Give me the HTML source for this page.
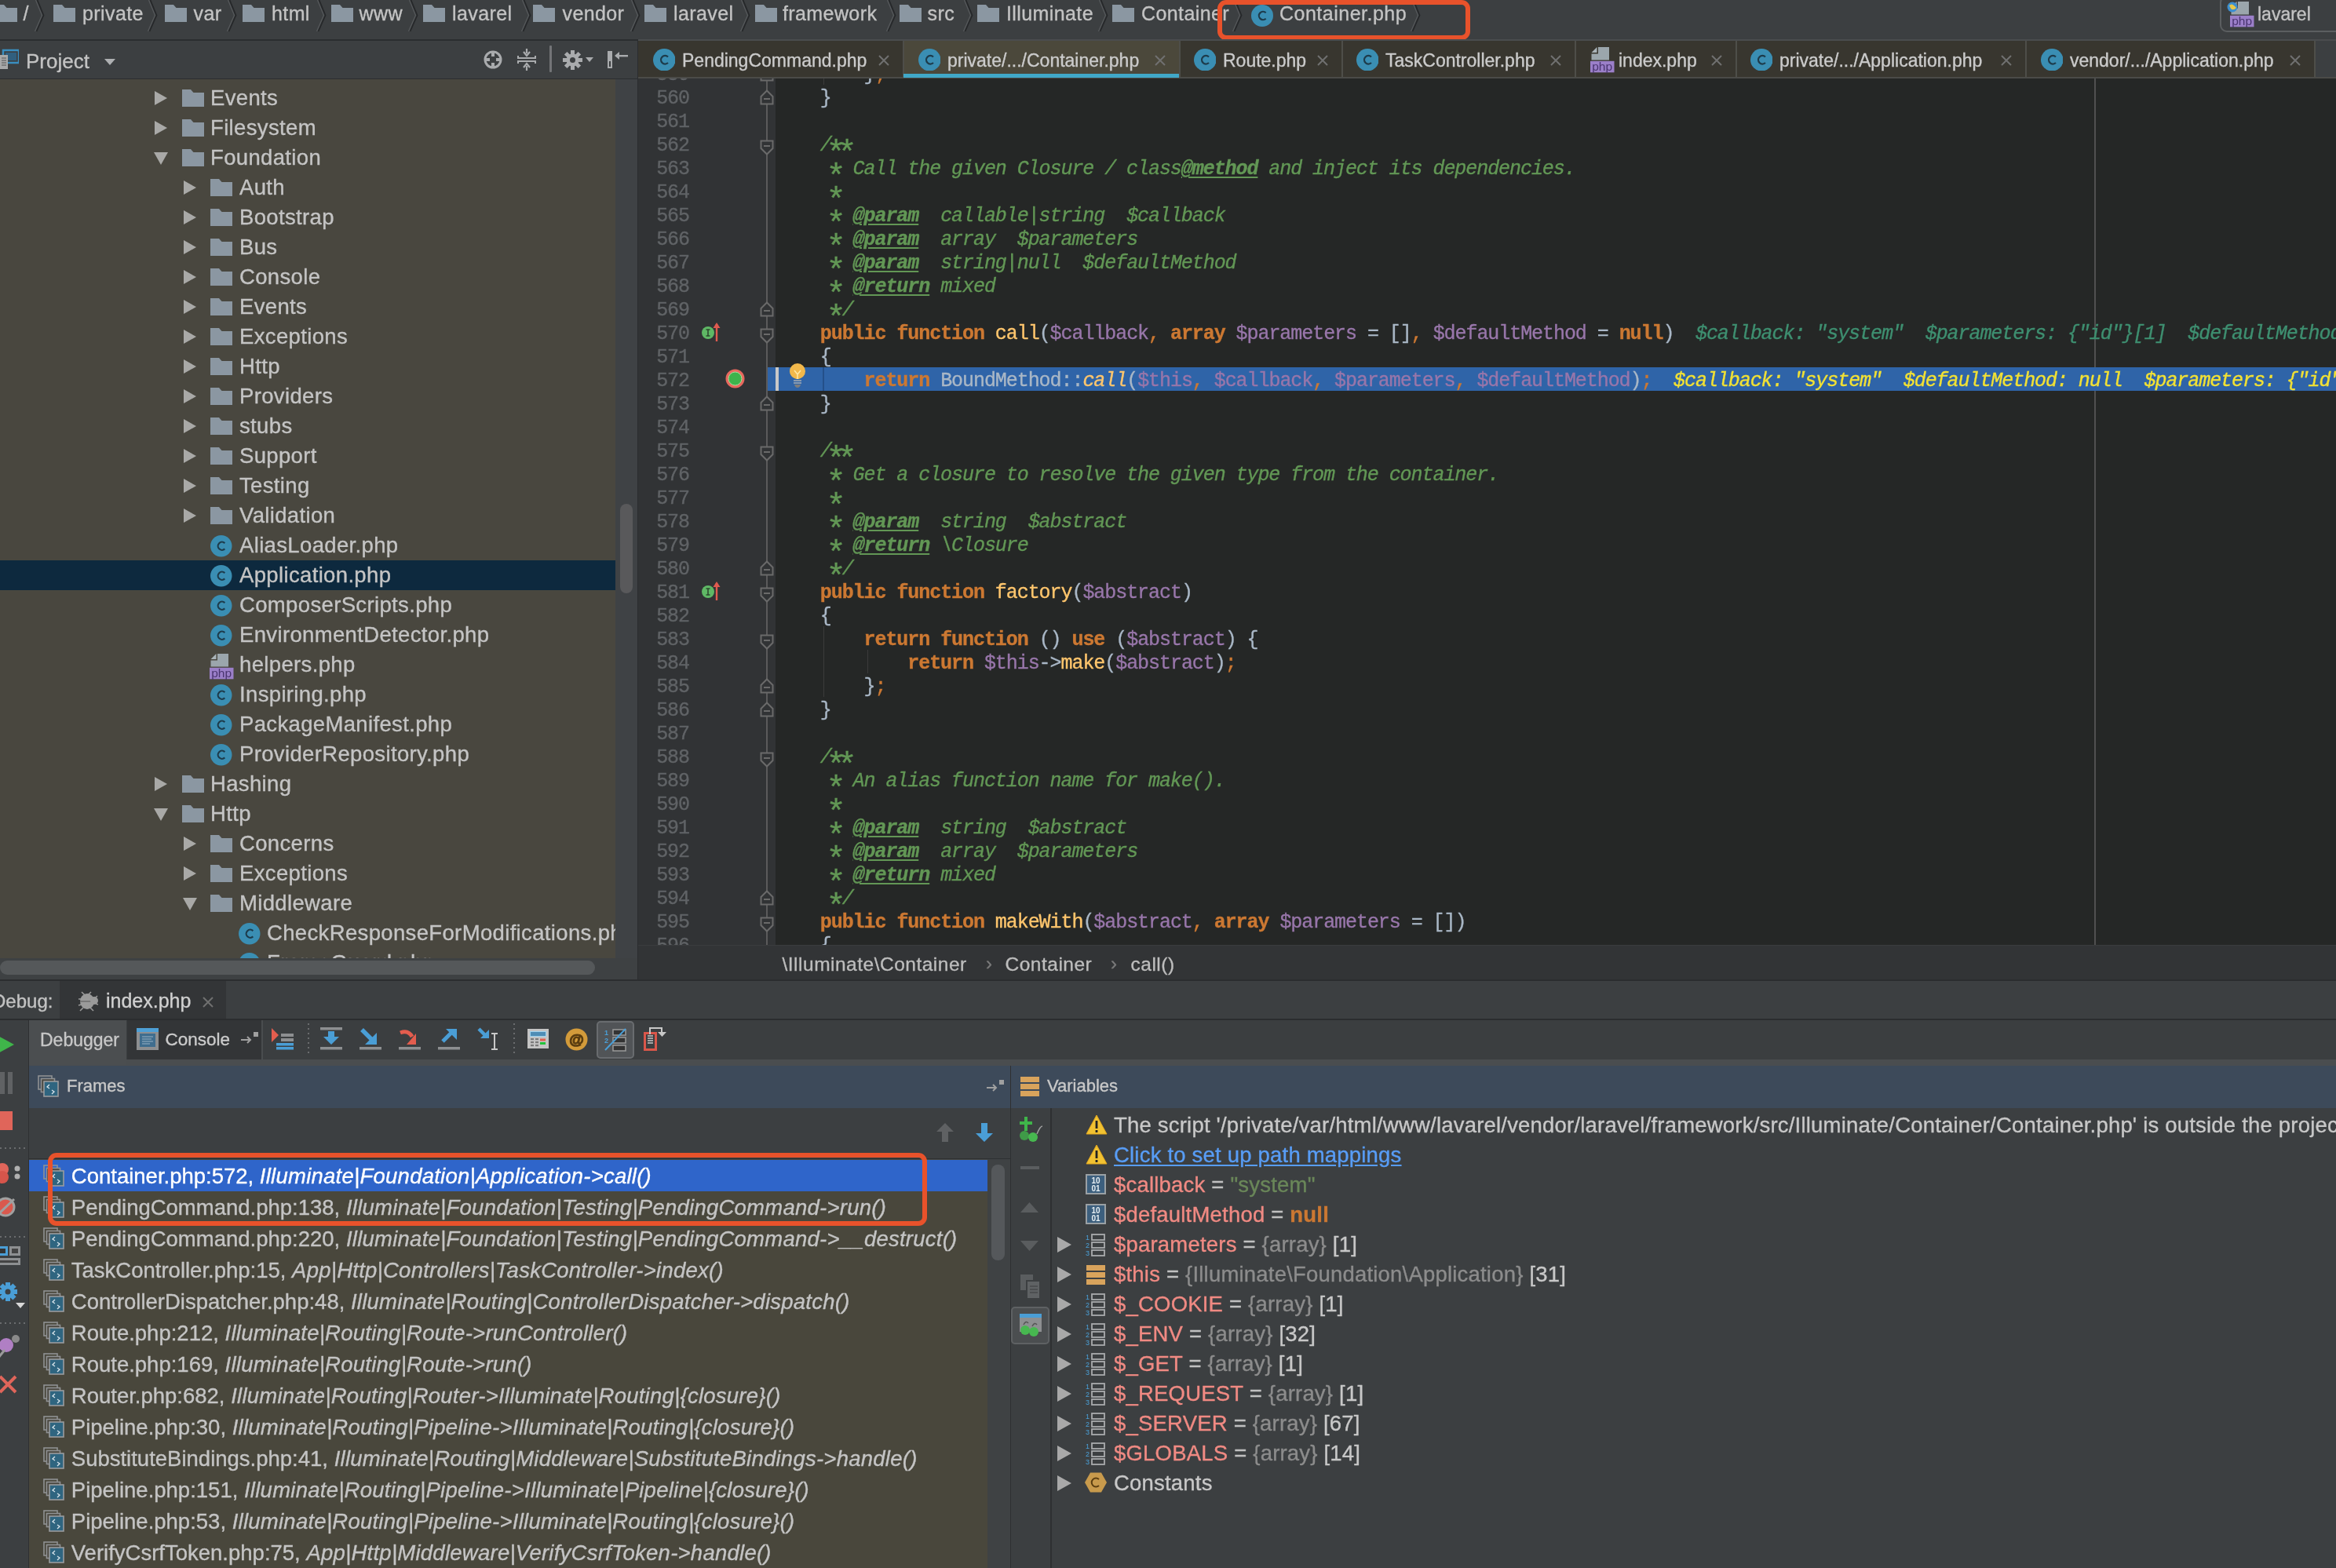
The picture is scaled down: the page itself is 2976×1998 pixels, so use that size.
<!DOCTYPE html><html><head><meta charset="utf-8"><style>
html,body{margin:0;padding:0;}
body{width:2976px;height:1998px;overflow:hidden;position:relative;background:#3c3f41;font-family:'Liberation Sans',sans-serif;}
div{position:absolute;box-sizing:border-box;}
.t{white-space:pre;-webkit-text-stroke-width:0.35px;}
</style></head><body><div id="root" style="left:0;top:0;width:2976px;height:1998px;will-change:transform;">
<div style="left:813px;top:100px;width:175px;height:1104px;background:#313335;"></div>
<div style="left:988px;top:100px;width:1988px;height:1104px;background:#252726;"></div>
<div style="left:2668px;top:100px;width:2px;height:1104px;background:#505050;"></div>
<div style="left:976px;top:100px;width:2px;height:1104px;background:#5b5b5b;"></div>
<div style="left:978px;top:468px;width:1998px;height:30px;background:#2f64a8;"></div>
<div style="left:988px;top:468px;width:4px;height:30px;background:#c8c8c8;"></div>
<div class="t" style="left:989px;top:82.85px;font-family:'Liberation Mono', monospace;font-size:25px;line-height:25px;letter-spacing:-1.062px;color:#a9b7c6">        <span style="color:#a9b7c6;">}</span><span style="color:#cc7832;">;</span></div>
<div class="t" style="left:989px;top:112.85px;font-family:'Liberation Mono', monospace;font-size:25px;line-height:25px;letter-spacing:-1.062px;color:#a9b7c6">    <span style="color:#a9b7c6;">}</span></div>
<div class="t" style="left:989px;top:142.85px;font-family:'Liberation Mono', monospace;font-size:25px;line-height:25px;letter-spacing:-1.062px;color:#a9b7c6"></div>
<div class="t" style="left:989px;top:172.85px;font-family:'Liberation Mono', monospace;font-size:25px;line-height:25px;letter-spacing:-1.062px;color:#a9b7c6"><span style="color:#629755;font-style:italic;">    /<span style="font-size:42px;letter-spacing:-11.264px;position:relative;top:16px;left:-6.1px;font-style:normal;line-height:0">*</span><span style="font-size:42px;letter-spacing:-11.264px;position:relative;top:16px;left:-6.1px;font-style:normal;line-height:0">*</span></span></div>
<div class="t" style="left:989px;top:202.85px;font-family:'Liberation Mono', monospace;font-size:25px;line-height:25px;letter-spacing:-1.062px;color:#a9b7c6"><span style="color:#629755;font-style:italic;">     <span style="font-size:42px;letter-spacing:-11.264px;position:relative;top:16px;left:-6.1px;font-style:normal;line-height:0">*</span> Call the given Closure / class</span><span style="color:#629755;font-weight:bold;font-style:italic;text-decoration:underline;text-underline-offset:3px;text-decoration-thickness:2px;">@method</span><span style="color:#629755;font-style:italic;"> and inject its dependencies.</span></div>
<div class="t" style="left:989px;top:232.85px;font-family:'Liberation Mono', monospace;font-size:25px;line-height:25px;letter-spacing:-1.062px;color:#a9b7c6"><span style="color:#629755;font-style:italic;">     <span style="font-size:42px;letter-spacing:-11.264px;position:relative;top:16px;left:-6.1px;font-style:normal;line-height:0">*</span></span></div>
<div class="t" style="left:989px;top:262.85px;font-family:'Liberation Mono', monospace;font-size:25px;line-height:25px;letter-spacing:-1.062px;color:#a9b7c6"><span style="color:#629755;font-style:italic;">     <span style="font-size:42px;letter-spacing:-11.264px;position:relative;top:16px;left:-6.1px;font-style:normal;line-height:0">*</span> </span><span style="color:#629755;font-weight:bold;font-style:italic;text-decoration:underline;text-underline-offset:3px;text-decoration-thickness:2px;">@param</span><span style="color:#629755;font-style:italic;">  callable|string  $callback</span></div>
<div class="t" style="left:989px;top:292.85px;font-family:'Liberation Mono', monospace;font-size:25px;line-height:25px;letter-spacing:-1.062px;color:#a9b7c6"><span style="color:#629755;font-style:italic;">     <span style="font-size:42px;letter-spacing:-11.264px;position:relative;top:16px;left:-6.1px;font-style:normal;line-height:0">*</span> </span><span style="color:#629755;font-weight:bold;font-style:italic;text-decoration:underline;text-underline-offset:3px;text-decoration-thickness:2px;">@param</span><span style="color:#629755;font-style:italic;">  array  $parameters</span></div>
<div class="t" style="left:989px;top:322.85px;font-family:'Liberation Mono', monospace;font-size:25px;line-height:25px;letter-spacing:-1.062px;color:#a9b7c6"><span style="color:#629755;font-style:italic;">     <span style="font-size:42px;letter-spacing:-11.264px;position:relative;top:16px;left:-6.1px;font-style:normal;line-height:0">*</span> </span><span style="color:#629755;font-weight:bold;font-style:italic;text-decoration:underline;text-underline-offset:3px;text-decoration-thickness:2px;">@param</span><span style="color:#629755;font-style:italic;">  string|null  $defaultMethod</span></div>
<div class="t" style="left:989px;top:352.85px;font-family:'Liberation Mono', monospace;font-size:25px;line-height:25px;letter-spacing:-1.062px;color:#a9b7c6"><span style="color:#629755;font-style:italic;">     <span style="font-size:42px;letter-spacing:-11.264px;position:relative;top:16px;left:-6.1px;font-style:normal;line-height:0">*</span> </span><span style="color:#629755;font-weight:bold;font-style:italic;text-decoration:underline;text-underline-offset:3px;text-decoration-thickness:2px;">@return</span><span style="color:#629755;font-style:italic;"> mixed</span></div>
<div class="t" style="left:989px;top:382.85px;font-family:'Liberation Mono', monospace;font-size:25px;line-height:25px;letter-spacing:-1.062px;color:#a9b7c6"><span style="color:#629755;font-style:italic;">     <span style="font-size:42px;letter-spacing:-11.264px;position:relative;top:16px;left:-6.1px;font-style:normal;line-height:0">*</span>/</span></div>
<div class="t" style="left:989px;top:412.85px;font-family:'Liberation Mono', monospace;font-size:25px;line-height:25px;letter-spacing:-1.062px;color:#a9b7c6">    <span style="color:#cc7832;font-weight:bold;">public</span> <span style="color:#cc7832;font-weight:bold;">function</span> <span style="color:#ffc66d;">call</span><span style="color:#a9b7c6;">(</span><span style="color:#9876aa;">$callback</span><span style="color:#cc7832;">,</span> <span style="color:#cc7832;font-weight:bold;">array</span> <span style="color:#9876aa;">$parameters</span> <span style="color:#a9b7c6;">=</span> <span style="color:#a9b7c6;">[</span><span style="color:#a9b7c6;">]</span><span style="color:#cc7832;">,</span> <span style="color:#9876aa;">$defaultMethod</span> <span style="color:#a9b7c6;">=</span> <span style="color:#cc7832;font-weight:bold;">null</span><span style="color:#a9b7c6;">)</span></div>
<div class="t" style="left:989px;top:442.85px;font-family:'Liberation Mono', monospace;font-size:25px;line-height:25px;letter-spacing:-1.062px;color:#a9b7c6">    <span style="color:#a9b7c6;">{</span></div>
<div class="t" style="left:989px;top:472.85px;font-family:'Liberation Mono', monospace;font-size:25px;line-height:25px;letter-spacing:-1.062px;color:#a9b7c6">        <span style="color:#cc7832;font-weight:bold;">return</span> <span style="color:#a9b7c6;">BoundMethod</span><span style="color:#a9b7c6;">:</span><span style="color:#a9b7c6;">:</span><span style="color:#ffc66d;font-style:italic;">call</span><span style="color:#a9b7c6;">(</span><span style="color:#9876aa;">$this</span><span style="color:#cc7832;">,</span> <span style="color:#9876aa;">$callback</span><span style="color:#cc7832;">,</span> <span style="color:#9876aa;">$parameters</span><span style="color:#cc7832;">,</span> <span style="color:#9876aa;">$defaultMethod</span><span style="color:#a9b7c6;">)</span><span style="color:#cc7832;">;</span></div>
<div class="t" style="left:989px;top:502.85px;font-family:'Liberation Mono', monospace;font-size:25px;line-height:25px;letter-spacing:-1.062px;color:#a9b7c6">    <span style="color:#a9b7c6;">}</span></div>
<div class="t" style="left:989px;top:532.85px;font-family:'Liberation Mono', monospace;font-size:25px;line-height:25px;letter-spacing:-1.062px;color:#a9b7c6"></div>
<div class="t" style="left:989px;top:562.85px;font-family:'Liberation Mono', monospace;font-size:25px;line-height:25px;letter-spacing:-1.062px;color:#a9b7c6"><span style="color:#629755;font-style:italic;">    /<span style="font-size:42px;letter-spacing:-11.264px;position:relative;top:16px;left:-6.1px;font-style:normal;line-height:0">*</span><span style="font-size:42px;letter-spacing:-11.264px;position:relative;top:16px;left:-6.1px;font-style:normal;line-height:0">*</span></span></div>
<div class="t" style="left:989px;top:592.85px;font-family:'Liberation Mono', monospace;font-size:25px;line-height:25px;letter-spacing:-1.062px;color:#a9b7c6"><span style="color:#629755;font-style:italic;">     <span style="font-size:42px;letter-spacing:-11.264px;position:relative;top:16px;left:-6.1px;font-style:normal;line-height:0">*</span> Get a closure to resolve the given type from the container.</span></div>
<div class="t" style="left:989px;top:622.85px;font-family:'Liberation Mono', monospace;font-size:25px;line-height:25px;letter-spacing:-1.062px;color:#a9b7c6"><span style="color:#629755;font-style:italic;">     <span style="font-size:42px;letter-spacing:-11.264px;position:relative;top:16px;left:-6.1px;font-style:normal;line-height:0">*</span></span></div>
<div class="t" style="left:989px;top:652.85px;font-family:'Liberation Mono', monospace;font-size:25px;line-height:25px;letter-spacing:-1.062px;color:#a9b7c6"><span style="color:#629755;font-style:italic;">     <span style="font-size:42px;letter-spacing:-11.264px;position:relative;top:16px;left:-6.1px;font-style:normal;line-height:0">*</span> </span><span style="color:#629755;font-weight:bold;font-style:italic;text-decoration:underline;text-underline-offset:3px;text-decoration-thickness:2px;">@param</span><span style="color:#629755;font-style:italic;">  string  $abstract</span></div>
<div class="t" style="left:989px;top:682.85px;font-family:'Liberation Mono', monospace;font-size:25px;line-height:25px;letter-spacing:-1.062px;color:#a9b7c6"><span style="color:#629755;font-style:italic;">     <span style="font-size:42px;letter-spacing:-11.264px;position:relative;top:16px;left:-6.1px;font-style:normal;line-height:0">*</span> </span><span style="color:#629755;font-weight:bold;font-style:italic;text-decoration:underline;text-underline-offset:3px;text-decoration-thickness:2px;">@return</span><span style="color:#629755;font-style:italic;"> \Closure</span></div>
<div class="t" style="left:989px;top:712.85px;font-family:'Liberation Mono', monospace;font-size:25px;line-height:25px;letter-spacing:-1.062px;color:#a9b7c6"><span style="color:#629755;font-style:italic;">     <span style="font-size:42px;letter-spacing:-11.264px;position:relative;top:16px;left:-6.1px;font-style:normal;line-height:0">*</span>/</span></div>
<div class="t" style="left:989px;top:742.85px;font-family:'Liberation Mono', monospace;font-size:25px;line-height:25px;letter-spacing:-1.062px;color:#a9b7c6">    <span style="color:#cc7832;font-weight:bold;">public</span> <span style="color:#cc7832;font-weight:bold;">function</span> <span style="color:#ffc66d;">factory</span><span style="color:#a9b7c6;">(</span><span style="color:#9876aa;">$abstract</span><span style="color:#a9b7c6;">)</span></div>
<div class="t" style="left:989px;top:772.85px;font-family:'Liberation Mono', monospace;font-size:25px;line-height:25px;letter-spacing:-1.062px;color:#a9b7c6">    <span style="color:#a9b7c6;">{</span></div>
<div class="t" style="left:989px;top:802.85px;font-family:'Liberation Mono', monospace;font-size:25px;line-height:25px;letter-spacing:-1.062px;color:#a9b7c6">        <span style="color:#cc7832;font-weight:bold;">return</span> <span style="color:#cc7832;font-weight:bold;">function</span> <span style="color:#a9b7c6;">(</span><span style="color:#a9b7c6;">)</span> <span style="color:#cc7832;font-weight:bold;">use</span> <span style="color:#a9b7c6;">(</span><span style="color:#9876aa;">$abstract</span><span style="color:#a9b7c6;">)</span> <span style="color:#a9b7c6;">{</span></div>
<div class="t" style="left:989px;top:832.85px;font-family:'Liberation Mono', monospace;font-size:25px;line-height:25px;letter-spacing:-1.062px;color:#a9b7c6">            <span style="color:#cc7832;font-weight:bold;">return</span> <span style="color:#9876aa;">$this</span><span style="color:#a9b7c6;">-</span><span style="color:#a9b7c6;">&gt;</span><span style="color:#ffc66d;">make</span><span style="color:#a9b7c6;">(</span><span style="color:#9876aa;">$abstract</span><span style="color:#a9b7c6;">)</span><span style="color:#cc7832;">;</span></div>
<div class="t" style="left:989px;top:862.85px;font-family:'Liberation Mono', monospace;font-size:25px;line-height:25px;letter-spacing:-1.062px;color:#a9b7c6">        <span style="color:#a9b7c6;">}</span><span style="color:#cc7832;">;</span></div>
<div class="t" style="left:989px;top:892.85px;font-family:'Liberation Mono', monospace;font-size:25px;line-height:25px;letter-spacing:-1.062px;color:#a9b7c6">    <span style="color:#a9b7c6;">}</span></div>
<div class="t" style="left:989px;top:922.85px;font-family:'Liberation Mono', monospace;font-size:25px;line-height:25px;letter-spacing:-1.062px;color:#a9b7c6"></div>
<div class="t" style="left:989px;top:952.85px;font-family:'Liberation Mono', monospace;font-size:25px;line-height:25px;letter-spacing:-1.062px;color:#a9b7c6"><span style="color:#629755;font-style:italic;">    /<span style="font-size:42px;letter-spacing:-11.264px;position:relative;top:16px;left:-6.1px;font-style:normal;line-height:0">*</span><span style="font-size:42px;letter-spacing:-11.264px;position:relative;top:16px;left:-6.1px;font-style:normal;line-height:0">*</span></span></div>
<div class="t" style="left:989px;top:982.85px;font-family:'Liberation Mono', monospace;font-size:25px;line-height:25px;letter-spacing:-1.062px;color:#a9b7c6"><span style="color:#629755;font-style:italic;">     <span style="font-size:42px;letter-spacing:-11.264px;position:relative;top:16px;left:-6.1px;font-style:normal;line-height:0">*</span> An alias function name for make().</span></div>
<div class="t" style="left:989px;top:1012.85px;font-family:'Liberation Mono', monospace;font-size:25px;line-height:25px;letter-spacing:-1.062px;color:#a9b7c6"><span style="color:#629755;font-style:italic;">     <span style="font-size:42px;letter-spacing:-11.264px;position:relative;top:16px;left:-6.1px;font-style:normal;line-height:0">*</span></span></div>
<div class="t" style="left:989px;top:1042.85px;font-family:'Liberation Mono', monospace;font-size:25px;line-height:25px;letter-spacing:-1.062px;color:#a9b7c6"><span style="color:#629755;font-style:italic;">     <span style="font-size:42px;letter-spacing:-11.264px;position:relative;top:16px;left:-6.1px;font-style:normal;line-height:0">*</span> </span><span style="color:#629755;font-weight:bold;font-style:italic;text-decoration:underline;text-underline-offset:3px;text-decoration-thickness:2px;">@param</span><span style="color:#629755;font-style:italic;">  string  $abstract</span></div>
<div class="t" style="left:989px;top:1072.85px;font-family:'Liberation Mono', monospace;font-size:25px;line-height:25px;letter-spacing:-1.062px;color:#a9b7c6"><span style="color:#629755;font-style:italic;">     <span style="font-size:42px;letter-spacing:-11.264px;position:relative;top:16px;left:-6.1px;font-style:normal;line-height:0">*</span> </span><span style="color:#629755;font-weight:bold;font-style:italic;text-decoration:underline;text-underline-offset:3px;text-decoration-thickness:2px;">@param</span><span style="color:#629755;font-style:italic;">  array  $parameters</span></div>
<div class="t" style="left:989px;top:1102.85px;font-family:'Liberation Mono', monospace;font-size:25px;line-height:25px;letter-spacing:-1.062px;color:#a9b7c6"><span style="color:#629755;font-style:italic;">     <span style="font-size:42px;letter-spacing:-11.264px;position:relative;top:16px;left:-6.1px;font-style:normal;line-height:0">*</span> </span><span style="color:#629755;font-weight:bold;font-style:italic;text-decoration:underline;text-underline-offset:3px;text-decoration-thickness:2px;">@return</span><span style="color:#629755;font-style:italic;"> mixed</span></div>
<div class="t" style="left:989px;top:1132.85px;font-family:'Liberation Mono', monospace;font-size:25px;line-height:25px;letter-spacing:-1.062px;color:#a9b7c6"><span style="color:#629755;font-style:italic;">     <span style="font-size:42px;letter-spacing:-11.264px;position:relative;top:16px;left:-6.1px;font-style:normal;line-height:0">*</span>/</span></div>
<div class="t" style="left:989px;top:1162.85px;font-family:'Liberation Mono', monospace;font-size:25px;line-height:25px;letter-spacing:-1.062px;color:#a9b7c6">    <span style="color:#cc7832;font-weight:bold;">public</span> <span style="color:#cc7832;font-weight:bold;">function</span> <span style="color:#ffc66d;">makeWith</span><span style="color:#a9b7c6;">(</span><span style="color:#9876aa;">$abstract</span><span style="color:#cc7832;">,</span> <span style="color:#cc7832;font-weight:bold;">array</span> <span style="color:#9876aa;">$parameters</span> <span style="color:#a9b7c6;">=</span> <span style="color:#a9b7c6;">[</span><span style="color:#a9b7c6;">]</span><span style="color:#a9b7c6;">)</span></div>
<div class="t" style="left:989px;top:1192.85px;font-family:'Liberation Mono', monospace;font-size:25px;line-height:25px;letter-spacing:-1.062px;color:#a9b7c6">    <span style="color:#a9b7c6;">{</span></div>
<div class="t" style="left:2159.96px;top:412.85px;font-family:'Liberation Mono', monospace;font-size:25px;line-height:25px;letter-spacing:-1.062px;color:#3e8f70;font-style:italic;font-weight:normal">$callback: &quot;system&quot;  $parameters: {&quot;id&quot;}[1]  $defaultMethod: null</div>
<div class="t" style="left:2132.08px;top:472.85px;font-family:'Liberation Mono', monospace;font-size:25px;line-height:25px;letter-spacing:-1.062px;color:#f2e134;font-style:italic;font-weight:normal">$callback: &quot;system&quot;  $defaultMethod: null  $parameters: {&quot;id&quot;}[1]</div>
<div style="left:1049px;top:798px;width:1px;height:30px;background:#3b3b3b;"></div>
<div style="left:1049px;top:828px;width:1px;height:30px;background:#3b3b3b;"></div>
<div style="left:1049px;top:858px;width:1px;height:30px;background:#3b3b3b;"></div>
<div style="left:1105px;top:828px;width:1px;height:30px;background:#3b3b3b;"></div>
<div style="left:1049px;top:78px;width:1px;height:30px;background:#3b3b3b;"></div>
<div style="left:1048px;top:468px;width:2px;height:30px;background:#24508a;"></div>
<div class="t" style="left:836.18px;top:82.85px;font-family:'Liberation Mono', monospace;font-size:25px;line-height:25px;letter-spacing:-1.062px;color:#606366">559</div>
<div class="t" style="left:836.18px;top:112.85px;font-family:'Liberation Mono', monospace;font-size:25px;line-height:25px;letter-spacing:-1.062px;color:#606366">560</div>
<div class="t" style="left:836.18px;top:142.85px;font-family:'Liberation Mono', monospace;font-size:25px;line-height:25px;letter-spacing:-1.062px;color:#606366">561</div>
<div class="t" style="left:836.18px;top:172.85px;font-family:'Liberation Mono', monospace;font-size:25px;line-height:25px;letter-spacing:-1.062px;color:#606366">562</div>
<div class="t" style="left:836.18px;top:202.85px;font-family:'Liberation Mono', monospace;font-size:25px;line-height:25px;letter-spacing:-1.062px;color:#606366">563</div>
<div class="t" style="left:836.18px;top:232.85px;font-family:'Liberation Mono', monospace;font-size:25px;line-height:25px;letter-spacing:-1.062px;color:#606366">564</div>
<div class="t" style="left:836.18px;top:262.85px;font-family:'Liberation Mono', monospace;font-size:25px;line-height:25px;letter-spacing:-1.062px;color:#606366">565</div>
<div class="t" style="left:836.18px;top:292.85px;font-family:'Liberation Mono', monospace;font-size:25px;line-height:25px;letter-spacing:-1.062px;color:#606366">566</div>
<div class="t" style="left:836.18px;top:322.85px;font-family:'Liberation Mono', monospace;font-size:25px;line-height:25px;letter-spacing:-1.062px;color:#606366">567</div>
<div class="t" style="left:836.18px;top:352.85px;font-family:'Liberation Mono', monospace;font-size:25px;line-height:25px;letter-spacing:-1.062px;color:#606366">568</div>
<div class="t" style="left:836.18px;top:382.85px;font-family:'Liberation Mono', monospace;font-size:25px;line-height:25px;letter-spacing:-1.062px;color:#606366">569</div>
<div class="t" style="left:836.18px;top:412.85px;font-family:'Liberation Mono', monospace;font-size:25px;line-height:25px;letter-spacing:-1.062px;color:#606366">570</div>
<div class="t" style="left:836.18px;top:442.85px;font-family:'Liberation Mono', monospace;font-size:25px;line-height:25px;letter-spacing:-1.062px;color:#606366">571</div>
<div class="t" style="left:836.18px;top:472.85px;font-family:'Liberation Mono', monospace;font-size:25px;line-height:25px;letter-spacing:-1.062px;color:#606366">572</div>
<div class="t" style="left:836.18px;top:502.85px;font-family:'Liberation Mono', monospace;font-size:25px;line-height:25px;letter-spacing:-1.062px;color:#606366">573</div>
<div class="t" style="left:836.18px;top:532.85px;font-family:'Liberation Mono', monospace;font-size:25px;line-height:25px;letter-spacing:-1.062px;color:#606366">574</div>
<div class="t" style="left:836.18px;top:562.85px;font-family:'Liberation Mono', monospace;font-size:25px;line-height:25px;letter-spacing:-1.062px;color:#606366">575</div>
<div class="t" style="left:836.18px;top:592.85px;font-family:'Liberation Mono', monospace;font-size:25px;line-height:25px;letter-spacing:-1.062px;color:#606366">576</div>
<div class="t" style="left:836.18px;top:622.85px;font-family:'Liberation Mono', monospace;font-size:25px;line-height:25px;letter-spacing:-1.062px;color:#606366">577</div>
<div class="t" style="left:836.18px;top:652.85px;font-family:'Liberation Mono', monospace;font-size:25px;line-height:25px;letter-spacing:-1.062px;color:#606366">578</div>
<div class="t" style="left:836.18px;top:682.85px;font-family:'Liberation Mono', monospace;font-size:25px;line-height:25px;letter-spacing:-1.062px;color:#606366">579</div>
<div class="t" style="left:836.18px;top:712.85px;font-family:'Liberation Mono', monospace;font-size:25px;line-height:25px;letter-spacing:-1.062px;color:#606366">580</div>
<div class="t" style="left:836.18px;top:742.85px;font-family:'Liberation Mono', monospace;font-size:25px;line-height:25px;letter-spacing:-1.062px;color:#606366">581</div>
<div class="t" style="left:836.18px;top:772.85px;font-family:'Liberation Mono', monospace;font-size:25px;line-height:25px;letter-spacing:-1.062px;color:#606366">582</div>
<div class="t" style="left:836.18px;top:802.85px;font-family:'Liberation Mono', monospace;font-size:25px;line-height:25px;letter-spacing:-1.062px;color:#606366">583</div>
<div class="t" style="left:836.18px;top:832.85px;font-family:'Liberation Mono', monospace;font-size:25px;line-height:25px;letter-spacing:-1.062px;color:#606366">584</div>
<div class="t" style="left:836.18px;top:862.85px;font-family:'Liberation Mono', monospace;font-size:25px;line-height:25px;letter-spacing:-1.062px;color:#606366">585</div>
<div class="t" style="left:836.18px;top:892.85px;font-family:'Liberation Mono', monospace;font-size:25px;line-height:25px;letter-spacing:-1.062px;color:#606366">586</div>
<div class="t" style="left:836.18px;top:922.85px;font-family:'Liberation Mono', monospace;font-size:25px;line-height:25px;letter-spacing:-1.062px;color:#606366">587</div>
<div class="t" style="left:836.18px;top:952.85px;font-family:'Liberation Mono', monospace;font-size:25px;line-height:25px;letter-spacing:-1.062px;color:#606366">588</div>
<div class="t" style="left:836.18px;top:982.85px;font-family:'Liberation Mono', monospace;font-size:25px;line-height:25px;letter-spacing:-1.062px;color:#606366">589</div>
<div class="t" style="left:836.18px;top:1012.85px;font-family:'Liberation Mono', monospace;font-size:25px;line-height:25px;letter-spacing:-1.062px;color:#606366">590</div>
<div class="t" style="left:836.18px;top:1042.85px;font-family:'Liberation Mono', monospace;font-size:25px;line-height:25px;letter-spacing:-1.062px;color:#606366">591</div>
<div class="t" style="left:836.18px;top:1072.85px;font-family:'Liberation Mono', monospace;font-size:25px;line-height:25px;letter-spacing:-1.062px;color:#606366">592</div>
<div class="t" style="left:836.18px;top:1102.85px;font-family:'Liberation Mono', monospace;font-size:25px;line-height:25px;letter-spacing:-1.062px;color:#606366">593</div>
<div class="t" style="left:836.18px;top:1132.85px;font-family:'Liberation Mono', monospace;font-size:25px;line-height:25px;letter-spacing:-1.062px;color:#606366">594</div>
<div class="t" style="left:836.18px;top:1162.85px;font-family:'Liberation Mono', monospace;font-size:25px;line-height:25px;letter-spacing:-1.062px;color:#606366">595</div>
<div class="t" style="left:836.18px;top:1192.85px;font-family:'Liberation Mono', monospace;font-size:25px;line-height:25px;letter-spacing:-1.062px;color:#606366">596</div>
<svg style="position:absolute;left:968px;top:178px;" width="18" height="20" viewBox="0 0 18 20"><path d="M1.5 1.5 H16.5 V11 L9 18.5 L1.5 11 Z" fill="#313335" stroke="#6a6a6a" stroke-width="2"/><path d="M5 8 H13" stroke="#6a6a6a" stroke-width="2"/></svg>
<svg style="position:absolute;left:968px;top:418px;" width="18" height="20" viewBox="0 0 18 20"><path d="M1.5 1.5 H16.5 V11 L9 18.5 L1.5 11 Z" fill="#313335" stroke="#6a6a6a" stroke-width="2"/><path d="M5 8 H13" stroke="#6a6a6a" stroke-width="2"/></svg>
<svg style="position:absolute;left:968px;top:568px;" width="18" height="20" viewBox="0 0 18 20"><path d="M1.5 1.5 H16.5 V11 L9 18.5 L1.5 11 Z" fill="#313335" stroke="#6a6a6a" stroke-width="2"/><path d="M5 8 H13" stroke="#6a6a6a" stroke-width="2"/></svg>
<svg style="position:absolute;left:968px;top:748px;" width="18" height="20" viewBox="0 0 18 20"><path d="M1.5 1.5 H16.5 V11 L9 18.5 L1.5 11 Z" fill="#313335" stroke="#6a6a6a" stroke-width="2"/><path d="M5 8 H13" stroke="#6a6a6a" stroke-width="2"/></svg>
<svg style="position:absolute;left:968px;top:808px;" width="18" height="20" viewBox="0 0 18 20"><path d="M1.5 1.5 H16.5 V11 L9 18.5 L1.5 11 Z" fill="#313335" stroke="#6a6a6a" stroke-width="2"/><path d="M5 8 H13" stroke="#6a6a6a" stroke-width="2"/></svg>
<svg style="position:absolute;left:968px;top:958px;" width="18" height="20" viewBox="0 0 18 20"><path d="M1.5 1.5 H16.5 V11 L9 18.5 L1.5 11 Z" fill="#313335" stroke="#6a6a6a" stroke-width="2"/><path d="M5 8 H13" stroke="#6a6a6a" stroke-width="2"/></svg>
<svg style="position:absolute;left:968px;top:1168px;" width="18" height="20" viewBox="0 0 18 20"><path d="M1.5 1.5 H16.5 V11 L9 18.5 L1.5 11 Z" fill="#313335" stroke="#6a6a6a" stroke-width="2"/><path d="M5 8 H13" stroke="#6a6a6a" stroke-width="2"/></svg>
<svg style="position:absolute;left:968px;top:84px;" width="18" height="20" viewBox="0 0 18 20"><path d="M1.5 18.5 H16.5 V9 L9 1.5 L1.5 9 Z" fill="#313335" stroke="#6a6a6a" stroke-width="2"/><path d="M5 12 H13" stroke="#6a6a6a" stroke-width="2"/></svg>
<svg style="position:absolute;left:968px;top:114px;" width="18" height="20" viewBox="0 0 18 20"><path d="M1.5 18.5 H16.5 V9 L9 1.5 L1.5 9 Z" fill="#313335" stroke="#6a6a6a" stroke-width="2"/><path d="M5 12 H13" stroke="#6a6a6a" stroke-width="2"/></svg>
<svg style="position:absolute;left:968px;top:384px;" width="18" height="20" viewBox="0 0 18 20"><path d="M1.5 18.5 H16.5 V9 L9 1.5 L1.5 9 Z" fill="#313335" stroke="#6a6a6a" stroke-width="2"/><path d="M5 12 H13" stroke="#6a6a6a" stroke-width="2"/></svg>
<svg style="position:absolute;left:968px;top:504px;" width="18" height="20" viewBox="0 0 18 20"><path d="M1.5 18.5 H16.5 V9 L9 1.5 L1.5 9 Z" fill="#313335" stroke="#6a6a6a" stroke-width="2"/><path d="M5 12 H13" stroke="#6a6a6a" stroke-width="2"/></svg>
<svg style="position:absolute;left:968px;top:714px;" width="18" height="20" viewBox="0 0 18 20"><path d="M1.5 18.5 H16.5 V9 L9 1.5 L1.5 9 Z" fill="#313335" stroke="#6a6a6a" stroke-width="2"/><path d="M5 12 H13" stroke="#6a6a6a" stroke-width="2"/></svg>
<svg style="position:absolute;left:968px;top:864px;" width="18" height="20" viewBox="0 0 18 20"><path d="M1.5 18.5 H16.5 V9 L9 1.5 L1.5 9 Z" fill="#313335" stroke="#6a6a6a" stroke-width="2"/><path d="M5 12 H13" stroke="#6a6a6a" stroke-width="2"/></svg>
<svg style="position:absolute;left:968px;top:894px;" width="18" height="20" viewBox="0 0 18 20"><path d="M1.5 18.5 H16.5 V9 L9 1.5 L1.5 9 Z" fill="#313335" stroke="#6a6a6a" stroke-width="2"/><path d="M5 12 H13" stroke="#6a6a6a" stroke-width="2"/></svg>
<svg style="position:absolute;left:968px;top:1134px;" width="18" height="20" viewBox="0 0 18 20"><path d="M1.5 18.5 H16.5 V9 L9 1.5 L1.5 9 Z" fill="#313335" stroke="#6a6a6a" stroke-width="2"/><path d="M5 12 H13" stroke="#6a6a6a" stroke-width="2"/></svg>
<svg style="position:absolute;left:893px;top:409px;" width="26" height="28" viewBox="0 0 26 28"><circle cx="9" cy="15" r="8" fill="#5fb865"/><path d="M6.5 11 H11.5 M9 11 V19 M6.5 19 H11.5" stroke="#2d4a2e" stroke-width="1.6"/><path d="M20 4 V26" stroke="#e05a4f" stroke-width="2.4"/><path d="M15.5 9 L20 2 L24.5 9 Z" fill="#e05a4f"/></svg>
<svg style="position:absolute;left:893px;top:739px;" width="26" height="28" viewBox="0 0 26 28"><circle cx="9" cy="15" r="8" fill="#5fb865"/><path d="M6.5 11 H11.5 M9 11 V19 M6.5 19 H11.5" stroke="#2d4a2e" stroke-width="1.6"/><path d="M20 4 V26" stroke="#e05a4f" stroke-width="2.4"/><path d="M15.5 9 L20 2 L24.5 9 Z" fill="#e05a4f"/></svg>
<svg style="position:absolute;left:924px;top:470px;" width="25" height="25" viewBox="0 0 25 25"><circle cx="12.5" cy="12.5" r="12" fill="#e8685e"/><circle cx="12.5" cy="12.5" r="8.5" fill="#3db34c" stroke="#a8e0a0" stroke-width="1"/></svg>
<svg style="position:absolute;left:1005px;top:463px;" width="22" height="31" viewBox="0 0 22 31"><circle cx="11" cy="10" r="10" fill="#f2b84b"/><path d="M5 14 L9 20 H13 L17 14 Z" fill="#f2b84b"/><path d="M7 9 L11 14 L15 9 M11 14 V20" stroke="#ffe9a8" stroke-width="1.5" fill="none"/><rect x="6" y="21" width="10" height="2" fill="#8a9bb0"/><rect x="6" y="24" width="10" height="2" fill="#8a9bb0"/><path d="M7 27 H15 Q14 31 11 31 Q8 31 7 27 Z" fill="#7d7d7d"/></svg>
<div style="left:813px;top:1204px;width:2163px;height:45px;background:#323436;"></div>
<div style="left:813px;top:1204px;width:2163px;height:1px;background:#3a3c3e;"></div>
<div class="t" style="left:996.5px;top:1216.76px;font-size:24.5px;line-height:24.5px;color:#bdbdbd;font-family:'Liberation Sans', sans-serif;font-weight:normal;font-style:normal;letter-spacing:0.5px">\Illuminate\Container</div>
<div class="t" style="left:1256px;top:1216.18px;font-size:24px;line-height:24px;color:#7a7a7a;font-family:'Liberation Sans', sans-serif;font-weight:normal;font-style:normal;">›</div>
<div class="t" style="left:1280.5px;top:1216.76px;font-size:24.5px;line-height:24.5px;color:#bdbdbd;font-family:'Liberation Sans', sans-serif;font-weight:normal;font-style:normal;letter-spacing:0.5px">Container</div>
<div class="t" style="left:1415px;top:1216.18px;font-size:24px;line-height:24px;color:#7a7a7a;font-family:'Liberation Sans', sans-serif;font-weight:normal;font-style:normal;">›</div>
<div class="t" style="left:1440.5px;top:1216.76px;font-size:24.5px;line-height:24.5px;color:#bdbdbd;font-family:'Liberation Sans', sans-serif;font-weight:normal;font-style:normal;letter-spacing:0.5px">call()</div>
<div style="left:0;top:101px;width:784px;height:1120px;overflow:hidden;background:#49473f">
<svg style="position:absolute;left:197px;top:15px;" width="16" height="18" viewBox="0 0 16 18"><path d="M0 0 L16 9.0 L0 18 Z" fill="#a9a9a7"/></svg>
<svg style="position:absolute;left:232px;top:13px;" width="28" height="22" viewBox="0 0 28 22"><path d="M0 0 H11 L14.5 4 H28 V22 H0 Z" fill="#8b97a2"/></svg>
<div class="t" style="left:268px;top:10.02px;font-size:27.5px;line-height:27.5px;color:#c4c4c4;font-family:'Liberation Sans', sans-serif;font-weight:normal;font-style:normal;letter-spacing:0.35px">Events</div>
<svg style="position:absolute;left:197px;top:53px;" width="16" height="18" viewBox="0 0 16 18"><path d="M0 0 L16 9.0 L0 18 Z" fill="#a9a9a7"/></svg>
<svg style="position:absolute;left:232px;top:51px;" width="28" height="22" viewBox="0 0 28 22"><path d="M0 0 H11 L14.5 4 H28 V22 H0 Z" fill="#8b97a2"/></svg>
<div class="t" style="left:268px;top:48.02px;font-size:27.5px;line-height:27.5px;color:#c4c4c4;font-family:'Liberation Sans', sans-serif;font-weight:normal;font-style:normal;letter-spacing:0.35px">Filesystem</div>
<svg style="position:absolute;left:196px;top:93px;" width="18" height="16" viewBox="0 0 18 16"><path d="M0 0 L18 0 L9.0 16 Z" fill="#a9a9a7"/></svg>
<svg style="position:absolute;left:232px;top:89px;" width="28" height="22" viewBox="0 0 28 22"><path d="M0 0 H11 L14.5 4 H28 V22 H0 Z" fill="#8b97a2"/></svg>
<div class="t" style="left:268px;top:86.02px;font-size:27.5px;line-height:27.5px;color:#c4c4c4;font-family:'Liberation Sans', sans-serif;font-weight:normal;font-style:normal;letter-spacing:0.35px">Foundation</div>
<svg style="position:absolute;left:234px;top:129px;" width="16" height="18" viewBox="0 0 16 18"><path d="M0 0 L16 9.0 L0 18 Z" fill="#a9a9a7"/></svg>
<svg style="position:absolute;left:268px;top:127px;" width="28" height="22" viewBox="0 0 28 22"><path d="M0 0 H11 L14.5 4 H28 V22 H0 Z" fill="#8b97a2"/></svg>
<div class="t" style="left:305px;top:124.02px;font-size:27.5px;line-height:27.5px;color:#c4c4c4;font-family:'Liberation Sans', sans-serif;font-weight:normal;font-style:normal;letter-spacing:0.35px">Auth</div>
<svg style="position:absolute;left:234px;top:167px;" width="16" height="18" viewBox="0 0 16 18"><path d="M0 0 L16 9.0 L0 18 Z" fill="#a9a9a7"/></svg>
<svg style="position:absolute;left:268px;top:165px;" width="28" height="22" viewBox="0 0 28 22"><path d="M0 0 H11 L14.5 4 H28 V22 H0 Z" fill="#8b97a2"/></svg>
<div class="t" style="left:305px;top:162.02px;font-size:27.5px;line-height:27.5px;color:#c4c4c4;font-family:'Liberation Sans', sans-serif;font-weight:normal;font-style:normal;letter-spacing:0.35px">Bootstrap</div>
<svg style="position:absolute;left:234px;top:205px;" width="16" height="18" viewBox="0 0 16 18"><path d="M0 0 L16 9.0 L0 18 Z" fill="#a9a9a7"/></svg>
<svg style="position:absolute;left:268px;top:203px;" width="28" height="22" viewBox="0 0 28 22"><path d="M0 0 H11 L14.5 4 H28 V22 H0 Z" fill="#8b97a2"/></svg>
<div class="t" style="left:305px;top:200.02px;font-size:27.5px;line-height:27.5px;color:#c4c4c4;font-family:'Liberation Sans', sans-serif;font-weight:normal;font-style:normal;letter-spacing:0.35px">Bus</div>
<svg style="position:absolute;left:234px;top:243px;" width="16" height="18" viewBox="0 0 16 18"><path d="M0 0 L16 9.0 L0 18 Z" fill="#a9a9a7"/></svg>
<svg style="position:absolute;left:268px;top:241px;" width="28" height="22" viewBox="0 0 28 22"><path d="M0 0 H11 L14.5 4 H28 V22 H0 Z" fill="#8b97a2"/></svg>
<div class="t" style="left:305px;top:238.02px;font-size:27.5px;line-height:27.5px;color:#c4c4c4;font-family:'Liberation Sans', sans-serif;font-weight:normal;font-style:normal;letter-spacing:0.35px">Console</div>
<svg style="position:absolute;left:234px;top:281px;" width="16" height="18" viewBox="0 0 16 18"><path d="M0 0 L16 9.0 L0 18 Z" fill="#a9a9a7"/></svg>
<svg style="position:absolute;left:268px;top:279px;" width="28" height="22" viewBox="0 0 28 22"><path d="M0 0 H11 L14.5 4 H28 V22 H0 Z" fill="#8b97a2"/></svg>
<div class="t" style="left:305px;top:276.02px;font-size:27.5px;line-height:27.5px;color:#c4c4c4;font-family:'Liberation Sans', sans-serif;font-weight:normal;font-style:normal;letter-spacing:0.35px">Events</div>
<svg style="position:absolute;left:234px;top:319px;" width="16" height="18" viewBox="0 0 16 18"><path d="M0 0 L16 9.0 L0 18 Z" fill="#a9a9a7"/></svg>
<svg style="position:absolute;left:268px;top:317px;" width="28" height="22" viewBox="0 0 28 22"><path d="M0 0 H11 L14.5 4 H28 V22 H0 Z" fill="#8b97a2"/></svg>
<div class="t" style="left:305px;top:314.02px;font-size:27.5px;line-height:27.5px;color:#c4c4c4;font-family:'Liberation Sans', sans-serif;font-weight:normal;font-style:normal;letter-spacing:0.35px">Exceptions</div>
<svg style="position:absolute;left:234px;top:357px;" width="16" height="18" viewBox="0 0 16 18"><path d="M0 0 L16 9.0 L0 18 Z" fill="#a9a9a7"/></svg>
<svg style="position:absolute;left:268px;top:355px;" width="28" height="22" viewBox="0 0 28 22"><path d="M0 0 H11 L14.5 4 H28 V22 H0 Z" fill="#8b97a2"/></svg>
<div class="t" style="left:305px;top:352.02px;font-size:27.5px;line-height:27.5px;color:#c4c4c4;font-family:'Liberation Sans', sans-serif;font-weight:normal;font-style:normal;letter-spacing:0.35px">Http</div>
<svg style="position:absolute;left:234px;top:395px;" width="16" height="18" viewBox="0 0 16 18"><path d="M0 0 L16 9.0 L0 18 Z" fill="#a9a9a7"/></svg>
<svg style="position:absolute;left:268px;top:393px;" width="28" height="22" viewBox="0 0 28 22"><path d="M0 0 H11 L14.5 4 H28 V22 H0 Z" fill="#8b97a2"/></svg>
<div class="t" style="left:305px;top:390.02px;font-size:27.5px;line-height:27.5px;color:#c4c4c4;font-family:'Liberation Sans', sans-serif;font-weight:normal;font-style:normal;letter-spacing:0.35px">Providers</div>
<svg style="position:absolute;left:234px;top:433px;" width="16" height="18" viewBox="0 0 16 18"><path d="M0 0 L16 9.0 L0 18 Z" fill="#a9a9a7"/></svg>
<svg style="position:absolute;left:268px;top:431px;" width="28" height="22" viewBox="0 0 28 22"><path d="M0 0 H11 L14.5 4 H28 V22 H0 Z" fill="#8b97a2"/></svg>
<div class="t" style="left:305px;top:428.02px;font-size:27.5px;line-height:27.5px;color:#c4c4c4;font-family:'Liberation Sans', sans-serif;font-weight:normal;font-style:normal;letter-spacing:0.35px">stubs</div>
<svg style="position:absolute;left:234px;top:471px;" width="16" height="18" viewBox="0 0 16 18"><path d="M0 0 L16 9.0 L0 18 Z" fill="#a9a9a7"/></svg>
<svg style="position:absolute;left:268px;top:469px;" width="28" height="22" viewBox="0 0 28 22"><path d="M0 0 H11 L14.5 4 H28 V22 H0 Z" fill="#8b97a2"/></svg>
<div class="t" style="left:305px;top:466.02px;font-size:27.5px;line-height:27.5px;color:#c4c4c4;font-family:'Liberation Sans', sans-serif;font-weight:normal;font-style:normal;letter-spacing:0.35px">Support</div>
<svg style="position:absolute;left:234px;top:509px;" width="16" height="18" viewBox="0 0 16 18"><path d="M0 0 L16 9.0 L0 18 Z" fill="#a9a9a7"/></svg>
<svg style="position:absolute;left:268px;top:507px;" width="28" height="22" viewBox="0 0 28 22"><path d="M0 0 H11 L14.5 4 H28 V22 H0 Z" fill="#8b97a2"/></svg>
<div class="t" style="left:305px;top:504.02px;font-size:27.5px;line-height:27.5px;color:#c4c4c4;font-family:'Liberation Sans', sans-serif;font-weight:normal;font-style:normal;letter-spacing:0.35px">Testing</div>
<svg style="position:absolute;left:234px;top:547px;" width="16" height="18" viewBox="0 0 16 18"><path d="M0 0 L16 9.0 L0 18 Z" fill="#a9a9a7"/></svg>
<svg style="position:absolute;left:268px;top:545px;" width="28" height="22" viewBox="0 0 28 22"><path d="M0 0 H11 L14.5 4 H28 V22 H0 Z" fill="#8b97a2"/></svg>
<div class="t" style="left:305px;top:542.02px;font-size:27.5px;line-height:27.5px;color:#c4c4c4;font-family:'Liberation Sans', sans-serif;font-weight:normal;font-style:normal;letter-spacing:0.35px">Validation</div>
<svg style="position:absolute;left:268.25px;top:581.25px;" width="27.5" height="27.5" viewBox="0 0 27.5 27.5"><circle cx="13.75" cy="13.75" r="13.75" fill="#3a8eb3"/><path d="M18.33 10.09 A5.09 5.09 0 1 0 18.33 17.41" fill="none" stroke="#1d3b4b" stroke-width="2.20" stroke-linecap="butt"/></svg>
<div class="t" style="left:305px;top:580.02px;font-size:27.5px;line-height:27.5px;color:#c4c4c4;font-family:'Liberation Sans', sans-serif;font-weight:normal;font-style:normal;letter-spacing:0.35px">AliasLoader.php</div>
<div style="left:0px;top:613px;width:784px;height:38px;background:#0d293e;"></div>
<svg style="position:absolute;left:268.25px;top:619.25px;" width="27.5" height="27.5" viewBox="0 0 27.5 27.5"><circle cx="13.75" cy="13.75" r="13.75" fill="#3a8eb3"/><path d="M18.33 10.09 A5.09 5.09 0 1 0 18.33 17.41" fill="none" stroke="#1d3b4b" stroke-width="2.20" stroke-linecap="butt"/></svg>
<div class="t" style="left:305px;top:618.02px;font-size:27.5px;line-height:27.5px;color:#c4c4c4;font-family:'Liberation Sans', sans-serif;font-weight:normal;font-style:normal;letter-spacing:0.35px">Application.php</div>
<svg style="position:absolute;left:268.25px;top:657.25px;" width="27.5" height="27.5" viewBox="0 0 27.5 27.5"><circle cx="13.75" cy="13.75" r="13.75" fill="#3a8eb3"/><path d="M18.33 10.09 A5.09 5.09 0 1 0 18.33 17.41" fill="none" stroke="#1d3b4b" stroke-width="2.20" stroke-linecap="butt"/></svg>
<div class="t" style="left:305px;top:656.02px;font-size:27.5px;line-height:27.5px;color:#c4c4c4;font-family:'Liberation Sans', sans-serif;font-weight:normal;font-style:normal;letter-spacing:0.35px">ComposerScripts.php</div>
<svg style="position:absolute;left:268.25px;top:695.25px;" width="27.5" height="27.5" viewBox="0 0 27.5 27.5"><circle cx="13.75" cy="13.75" r="13.75" fill="#3a8eb3"/><path d="M18.33 10.09 A5.09 5.09 0 1 0 18.33 17.41" fill="none" stroke="#1d3b4b" stroke-width="2.20" stroke-linecap="butt"/></svg>
<div class="t" style="left:305px;top:694.02px;font-size:27.5px;line-height:27.5px;color:#c4c4c4;font-family:'Liberation Sans', sans-serif;font-weight:normal;font-style:normal;letter-spacing:0.35px">EnvironmentDetector.php</div>
<svg style="position:absolute;left:267px;top:732px;" width="31" height="33" viewBox="0 0 31 33"><path d="M10 0 H24 V16.5 H1.5 V8.5 H10 Z" fill="#9ba6ac"/><path d="M1.5 7 L8.5 0 V7 Z" fill="#a9b3b8"/><rect x="0" y="17.8" width="30.5" height="14.5" fill="#9b7fc9"/><text x="15.2" y="30" font-family="Liberation Sans" font-size="15.5" fill="#4a3570" text-anchor="middle">php</text></svg>
<div class="t" style="left:305px;top:732.02px;font-size:27.5px;line-height:27.5px;color:#c4c4c4;font-family:'Liberation Sans', sans-serif;font-weight:normal;font-style:normal;letter-spacing:0.35px">helpers.php</div>
<svg style="position:absolute;left:268.25px;top:771.25px;" width="27.5" height="27.5" viewBox="0 0 27.5 27.5"><circle cx="13.75" cy="13.75" r="13.75" fill="#3a8eb3"/><path d="M18.33 10.09 A5.09 5.09 0 1 0 18.33 17.41" fill="none" stroke="#1d3b4b" stroke-width="2.20" stroke-linecap="butt"/></svg>
<div class="t" style="left:305px;top:770.02px;font-size:27.5px;line-height:27.5px;color:#c4c4c4;font-family:'Liberation Sans', sans-serif;font-weight:normal;font-style:normal;letter-spacing:0.35px">Inspiring.php</div>
<svg style="position:absolute;left:268.25px;top:809.25px;" width="27.5" height="27.5" viewBox="0 0 27.5 27.5"><circle cx="13.75" cy="13.75" r="13.75" fill="#3a8eb3"/><path d="M18.33 10.09 A5.09 5.09 0 1 0 18.33 17.41" fill="none" stroke="#1d3b4b" stroke-width="2.20" stroke-linecap="butt"/></svg>
<div class="t" style="left:305px;top:808.02px;font-size:27.5px;line-height:27.5px;color:#c4c4c4;font-family:'Liberation Sans', sans-serif;font-weight:normal;font-style:normal;letter-spacing:0.35px">PackageManifest.php</div>
<svg style="position:absolute;left:268.25px;top:847.25px;" width="27.5" height="27.5" viewBox="0 0 27.5 27.5"><circle cx="13.75" cy="13.75" r="13.75" fill="#3a8eb3"/><path d="M18.33 10.09 A5.09 5.09 0 1 0 18.33 17.41" fill="none" stroke="#1d3b4b" stroke-width="2.20" stroke-linecap="butt"/></svg>
<div class="t" style="left:305px;top:846.02px;font-size:27.5px;line-height:27.5px;color:#c4c4c4;font-family:'Liberation Sans', sans-serif;font-weight:normal;font-style:normal;letter-spacing:0.35px">ProviderRepository.php</div>
<svg style="position:absolute;left:197px;top:889px;" width="16" height="18" viewBox="0 0 16 18"><path d="M0 0 L16 9.0 L0 18 Z" fill="#a9a9a7"/></svg>
<svg style="position:absolute;left:232px;top:887px;" width="28" height="22" viewBox="0 0 28 22"><path d="M0 0 H11 L14.5 4 H28 V22 H0 Z" fill="#8b97a2"/></svg>
<div class="t" style="left:268px;top:884.02px;font-size:27.5px;line-height:27.5px;color:#c4c4c4;font-family:'Liberation Sans', sans-serif;font-weight:normal;font-style:normal;letter-spacing:0.35px">Hashing</div>
<svg style="position:absolute;left:196px;top:929px;" width="18" height="16" viewBox="0 0 18 16"><path d="M0 0 L18 0 L9.0 16 Z" fill="#a9a9a7"/></svg>
<svg style="position:absolute;left:232px;top:925px;" width="28" height="22" viewBox="0 0 28 22"><path d="M0 0 H11 L14.5 4 H28 V22 H0 Z" fill="#8b97a2"/></svg>
<div class="t" style="left:268px;top:922.02px;font-size:27.5px;line-height:27.5px;color:#c4c4c4;font-family:'Liberation Sans', sans-serif;font-weight:normal;font-style:normal;letter-spacing:0.35px">Http</div>
<svg style="position:absolute;left:234px;top:965px;" width="16" height="18" viewBox="0 0 16 18"><path d="M0 0 L16 9.0 L0 18 Z" fill="#a9a9a7"/></svg>
<svg style="position:absolute;left:268px;top:963px;" width="28" height="22" viewBox="0 0 28 22"><path d="M0 0 H11 L14.5 4 H28 V22 H0 Z" fill="#8b97a2"/></svg>
<div class="t" style="left:305px;top:960.02px;font-size:27.5px;line-height:27.5px;color:#c4c4c4;font-family:'Liberation Sans', sans-serif;font-weight:normal;font-style:normal;letter-spacing:0.35px">Concerns</div>
<svg style="position:absolute;left:234px;top:1003px;" width="16" height="18" viewBox="0 0 16 18"><path d="M0 0 L16 9.0 L0 18 Z" fill="#a9a9a7"/></svg>
<svg style="position:absolute;left:268px;top:1001px;" width="28" height="22" viewBox="0 0 28 22"><path d="M0 0 H11 L14.5 4 H28 V22 H0 Z" fill="#8b97a2"/></svg>
<div class="t" style="left:305px;top:998.02px;font-size:27.5px;line-height:27.5px;color:#c4c4c4;font-family:'Liberation Sans', sans-serif;font-weight:normal;font-style:normal;letter-spacing:0.35px">Exceptions</div>
<svg style="position:absolute;left:233px;top:1043px;" width="18" height="16" viewBox="0 0 18 16"><path d="M0 0 L18 0 L9.0 16 Z" fill="#a9a9a7"/></svg>
<svg style="position:absolute;left:268px;top:1039px;" width="28" height="22" viewBox="0 0 28 22"><path d="M0 0 H11 L14.5 4 H28 V22 H0 Z" fill="#8b97a2"/></svg>
<div class="t" style="left:305px;top:1036.02px;font-size:27.5px;line-height:27.5px;color:#c4c4c4;font-family:'Liberation Sans', sans-serif;font-weight:normal;font-style:normal;letter-spacing:0.35px">Middleware</div>
<svg style="position:absolute;left:304.25px;top:1075.25px;" width="27.5" height="27.5" viewBox="0 0 27.5 27.5"><circle cx="13.75" cy="13.75" r="13.75" fill="#3a8eb3"/><path d="M18.33 10.09 A5.09 5.09 0 1 0 18.33 17.41" fill="none" stroke="#1d3b4b" stroke-width="2.20" stroke-linecap="butt"/></svg>
<div class="t" style="left:340px;top:1074.02px;font-size:27.5px;line-height:27.5px;color:#c4c4c4;font-family:'Liberation Sans', sans-serif;font-weight:normal;font-style:normal;letter-spacing:0.35px">CheckResponseForModifications.php</div>
<svg style="position:absolute;left:304.25px;top:1113.25px;" width="27.5" height="27.5" viewBox="0 0 27.5 27.5"><circle cx="13.75" cy="13.75" r="13.75" fill="#3a8eb3"/><path d="M18.33 10.09 A5.09 5.09 0 1 0 18.33 17.41" fill="none" stroke="#1d3b4b" stroke-width="2.20" stroke-linecap="butt"/></svg>
<div class="t" style="left:340px;top:1112.02px;font-size:27.5px;line-height:27.5px;color:#c4c4c4;font-family:'Liberation Sans', sans-serif;font-weight:normal;font-style:normal;letter-spacing:0.35px">FrameGuard.php</div>
</div>
<div style="left:784px;top:101px;width:28px;height:1120px;background:#3f4245;"></div>
<div style="left:790px;top:642px;width:16px;height:114px;background:#59595b;border-radius:8px"></div>
<div style="left:0px;top:1221px;width:812px;height:27px;background:#3e4143;"></div>
<div style="left:0px;top:1224px;width:758px;height:18px;background:#55585a;border-radius:9px"></div>
<div style="left:0px;top:1248px;width:2976px;height:2px;background:#2b2d2f;"></div>
<div style="left:0px;top:0px;width:2976px;height:50px;background:#3c3f41;"></div>
<div style="left:0px;top:50px;width:2976px;height:2px;background:#2b2d2f;"></div>
<svg style="position:absolute;left:-6px;top:6px;" width="28" height="22" viewBox="0 0 28 22"><path d="M0 0 H11 L14.5 4 H28 V22 H0 Z" fill="#8b97a2"/></svg>
<div class="t" style="left:29.5px;top:4.84px;font-size:25px;line-height:25px;color:#c3c3c3;font-family:'Liberation Sans', sans-serif;font-weight:normal;font-style:normal;letter-spacing:0.4px">/</div>
<svg style="position:absolute;left:68px;top:6px;" width="28" height="22" viewBox="0 0 28 22"><path d="M0 0 H11 L14.5 4 H28 V22 H0 Z" fill="#8b97a2"/></svg>
<div class="t" style="left:105px;top:4.84px;font-size:25px;line-height:25px;color:#c3c3c3;font-family:'Liberation Sans', sans-serif;font-weight:normal;font-style:normal;letter-spacing:0.4px">private</div>
<svg style="position:absolute;left:210px;top:6px;" width="28" height="22" viewBox="0 0 28 22"><path d="M0 0 H11 L14.5 4 H28 V22 H0 Z" fill="#8b97a2"/></svg>
<div class="t" style="left:246.5px;top:4.84px;font-size:25px;line-height:25px;color:#c3c3c3;font-family:'Liberation Sans', sans-serif;font-weight:normal;font-style:normal;letter-spacing:0.4px">var</div>
<svg style="position:absolute;left:309px;top:6px;" width="28" height="22" viewBox="0 0 28 22"><path d="M0 0 H11 L14.5 4 H28 V22 H0 Z" fill="#8b97a2"/></svg>
<div class="t" style="left:346px;top:4.84px;font-size:25px;line-height:25px;color:#c3c3c3;font-family:'Liberation Sans', sans-serif;font-weight:normal;font-style:normal;letter-spacing:0.4px">html</div>
<svg style="position:absolute;left:422px;top:6px;" width="28" height="22" viewBox="0 0 28 22"><path d="M0 0 H11 L14.5 4 H28 V22 H0 Z" fill="#8b97a2"/></svg>
<div class="t" style="left:457.5px;top:4.84px;font-size:25px;line-height:25px;color:#c3c3c3;font-family:'Liberation Sans', sans-serif;font-weight:normal;font-style:normal;letter-spacing:0.4px">www</div>
<svg style="position:absolute;left:539px;top:6px;" width="28" height="22" viewBox="0 0 28 22"><path d="M0 0 H11 L14.5 4 H28 V22 H0 Z" fill="#8b97a2"/></svg>
<div class="t" style="left:576px;top:4.84px;font-size:25px;line-height:25px;color:#c3c3c3;font-family:'Liberation Sans', sans-serif;font-weight:normal;font-style:normal;letter-spacing:0.4px">lavarel</div>
<svg style="position:absolute;left:679px;top:6px;" width="28" height="22" viewBox="0 0 28 22"><path d="M0 0 H11 L14.5 4 H28 V22 H0 Z" fill="#8b97a2"/></svg>
<div class="t" style="left:716.5px;top:4.84px;font-size:25px;line-height:25px;color:#c3c3c3;font-family:'Liberation Sans', sans-serif;font-weight:normal;font-style:normal;letter-spacing:0.4px">vendor</div>
<svg style="position:absolute;left:821px;top:6px;" width="28" height="22" viewBox="0 0 28 22"><path d="M0 0 H11 L14.5 4 H28 V22 H0 Z" fill="#8b97a2"/></svg>
<div class="t" style="left:858px;top:4.84px;font-size:25px;line-height:25px;color:#c3c3c3;font-family:'Liberation Sans', sans-serif;font-weight:normal;font-style:normal;letter-spacing:0.4px">laravel</div>
<svg style="position:absolute;left:961.5px;top:6px;" width="28" height="22" viewBox="0 0 28 22"><path d="M0 0 H11 L14.5 4 H28 V22 H0 Z" fill="#8b97a2"/></svg>
<div class="t" style="left:997px;top:4.84px;font-size:25px;line-height:25px;color:#c3c3c3;font-family:'Liberation Sans', sans-serif;font-weight:normal;font-style:normal;letter-spacing:0.4px">framework</div>
<svg style="position:absolute;left:1145.5px;top:6px;" width="28" height="22" viewBox="0 0 28 22"><path d="M0 0 H11 L14.5 4 H28 V22 H0 Z" fill="#8b97a2"/></svg>
<div class="t" style="left:1181.5px;top:4.84px;font-size:25px;line-height:25px;color:#c3c3c3;font-family:'Liberation Sans', sans-serif;font-weight:normal;font-style:normal;letter-spacing:0.4px">src</div>
<svg style="position:absolute;left:1245px;top:6px;" width="28" height="22" viewBox="0 0 28 22"><path d="M0 0 H11 L14.5 4 H28 V22 H0 Z" fill="#8b97a2"/></svg>
<div class="t" style="left:1282px;top:4.84px;font-size:25px;line-height:25px;color:#c3c3c3;font-family:'Liberation Sans', sans-serif;font-weight:normal;font-style:normal;letter-spacing:0.4px">Illuminate</div>
<svg style="position:absolute;left:1417px;top:6px;" width="28" height="22" viewBox="0 0 28 22"><path d="M0 0 H11 L14.5 4 H28 V22 H0 Z" fill="#8b97a2"/></svg>
<div class="t" style="left:1454px;top:4.84px;font-size:25px;line-height:25px;color:#c3c3c3;font-family:'Liberation Sans', sans-serif;font-weight:normal;font-style:normal;letter-spacing:0.4px">Container</div>
<svg style="position:absolute;left:1593.5px;top:5.5px;" width="28" height="28" viewBox="0 0 28 28"><circle cx="14.0" cy="14.0" r="14.0" fill="#3a8eb3"/><path d="M18.66 10.27 A5.18 5.18 0 1 0 18.66 17.73" fill="none" stroke="#1d3b4b" stroke-width="2.24" stroke-linecap="butt"/></svg>
<div class="t" style="left:1630px;top:4.84px;font-size:25px;line-height:25px;color:#c3c3c3;font-family:'Liberation Sans', sans-serif;font-weight:normal;font-style:normal;letter-spacing:0.5px">Container.php</div>
<svg style="position:absolute;left:43px;top:0px;" width="16" height="42" viewBox="0 0 16 42"><path d="M2.5 0 L10.5 19.5 L1.5 40" fill="none" stroke="#56595b" stroke-width="1.3"/><path d="M4.5 0 L12.5 19.5 L3.5 40" fill="none" stroke="#26282a" stroke-width="1.8"/></svg>
<svg style="position:absolute;left:187px;top:0px;" width="16" height="42" viewBox="0 0 16 42"><path d="M2.5 0 L10.5 19.5 L1.5 40" fill="none" stroke="#56595b" stroke-width="1.3"/><path d="M4.5 0 L12.5 19.5 L3.5 40" fill="none" stroke="#26282a" stroke-width="1.8"/></svg>
<svg style="position:absolute;left:288px;top:0px;" width="16" height="42" viewBox="0 0 16 42"><path d="M2.5 0 L10.5 19.5 L1.5 40" fill="none" stroke="#56595b" stroke-width="1.3"/><path d="M4.5 0 L12.5 19.5 L3.5 40" fill="none" stroke="#26282a" stroke-width="1.8"/></svg>
<svg style="position:absolute;left:402px;top:0px;" width="16" height="42" viewBox="0 0 16 42"><path d="M2.5 0 L10.5 19.5 L1.5 40" fill="none" stroke="#56595b" stroke-width="1.3"/><path d="M4.5 0 L12.5 19.5 L3.5 40" fill="none" stroke="#26282a" stroke-width="1.8"/></svg>
<svg style="position:absolute;left:519px;top:0px;" width="16" height="42" viewBox="0 0 16 42"><path d="M2.5 0 L10.5 19.5 L1.5 40" fill="none" stroke="#56595b" stroke-width="1.3"/><path d="M4.5 0 L12.5 19.5 L3.5 40" fill="none" stroke="#26282a" stroke-width="1.8"/></svg>
<svg style="position:absolute;left:663px;top:0px;" width="16" height="42" viewBox="0 0 16 42"><path d="M2.5 0 L10.5 19.5 L1.5 40" fill="none" stroke="#56595b" stroke-width="1.3"/><path d="M4.5 0 L12.5 19.5 L3.5 40" fill="none" stroke="#26282a" stroke-width="1.8"/></svg>
<svg style="position:absolute;left:802px;top:0px;" width="16" height="42" viewBox="0 0 16 42"><path d="M2.5 0 L10.5 19.5 L1.5 40" fill="none" stroke="#56595b" stroke-width="1.3"/><path d="M4.5 0 L12.5 19.5 L3.5 40" fill="none" stroke="#26282a" stroke-width="1.8"/></svg>
<svg style="position:absolute;left:942px;top:0px;" width="16" height="42" viewBox="0 0 16 42"><path d="M2.5 0 L10.5 19.5 L1.5 40" fill="none" stroke="#56595b" stroke-width="1.3"/><path d="M4.5 0 L12.5 19.5 L3.5 40" fill="none" stroke="#26282a" stroke-width="1.8"/></svg>
<svg style="position:absolute;left:1128px;top:0px;" width="16" height="42" viewBox="0 0 16 42"><path d="M2.5 0 L10.5 19.5 L1.5 40" fill="none" stroke="#56595b" stroke-width="1.3"/><path d="M4.5 0 L12.5 19.5 L3.5 40" fill="none" stroke="#26282a" stroke-width="1.8"/></svg>
<svg style="position:absolute;left:1226px;top:0px;" width="16" height="42" viewBox="0 0 16 42"><path d="M2.5 0 L10.5 19.5 L1.5 40" fill="none" stroke="#56595b" stroke-width="1.3"/><path d="M4.5 0 L12.5 19.5 L3.5 40" fill="none" stroke="#26282a" stroke-width="1.8"/></svg>
<svg style="position:absolute;left:1398px;top:0px;" width="16" height="42" viewBox="0 0 16 42"><path d="M2.5 0 L10.5 19.5 L1.5 40" fill="none" stroke="#56595b" stroke-width="1.3"/><path d="M4.5 0 L12.5 19.5 L3.5 40" fill="none" stroke="#26282a" stroke-width="1.8"/></svg>
<svg style="position:absolute;left:1569px;top:0px;" width="16" height="42" viewBox="0 0 16 42"><path d="M2.5 0 L10.5 19.5 L1.5 40" fill="none" stroke="#56595b" stroke-width="1.3"/><path d="M4.5 0 L12.5 19.5 L3.5 40" fill="none" stroke="#26282a" stroke-width="1.8"/></svg>
<svg style="position:absolute;left:1796px;top:0px;" width="16" height="42" viewBox="0 0 16 42"><path d="M2.5 0 L10.5 19.5 L1.5 40" fill="none" stroke="#56595b" stroke-width="1.3"/><path d="M4.5 0 L12.5 19.5 L3.5 40" fill="none" stroke="#26282a" stroke-width="1.8"/></svg>
<div style="left:1551px;top:0px;width:322px;height:51px;border:6px solid #e8522b;border-radius:11px;"></div>
<div style="left:2828px;top:-6px;width:170px;height:47px;border:2px solid #5b5e60;border-radius:9px;background:#3c3f41;"></div>
<svg style="position:absolute;left:2841px;top:2px;" width="31" height="33" viewBox="0 0 31 33"><path d="M10 0 H24 V16.5 H1.5 V8.5 H10 Z" fill="#9ba6ac"/><path d="M1.5 7 L8.5 0 V7 Z" fill="#a9b3b8"/><rect x="0" y="17.8" width="30.5" height="14.5" fill="#9b7fc9"/><text x="15.2" y="30" font-family="Liberation Sans" font-size="15.5" fill="#4a3570" text-anchor="middle">php</text></svg>
<svg style="position:absolute;left:2837px;top:2px;" width="14" height="14" viewBox="0 0 14 14"><circle cx="7" cy="7" r="6.5" fill="#3c8fd0"/><path d="M3 5 Q6 2 9 5 T12 8 Q8 12 5 9 Z" fill="#e8c84a"/></svg>
<div class="t" style="left:2876px;top:7.23px;font-size:23px;line-height:23px;color:#c3c3c3;font-family:'Liberation Sans', sans-serif;font-weight:normal;font-style:normal;">lavarel</div>
<div style="left:0px;top:52px;width:812px;height:48px;background:#3c3f41;"></div>
<div style="left:0px;top:100px;width:813px;height:1px;background:#2b2d2f;"></div>
<div style="left:812px;top:52px;width:1px;height:1198px;background:#2b2d2f;"></div>
<svg style="position:absolute;left:0px;top:62px;" width="24" height="28" viewBox="0 0 24 28"><rect x="4" y="2" width="20" height="16" fill="none" stroke="#3a8ec0" stroke-width="2.5"/><rect x="7" y="5" width="14" height="10" fill="#315f7e"/><rect x="0" y="8" width="10" height="18" fill="#a9a9a9"/><path d="M2 12h6M2 15h6M2 18h6M2 21h6" stroke="#555" stroke-width="1"/></svg>
<div class="t" style="left:33px;top:64.99px;font-size:26px;line-height:26px;color:#c3c3c3;font-family:'Liberation Sans', sans-serif;font-weight:normal;font-style:normal;">Project</div>
<svg style="position:absolute;left:133px;top:75px;" width="14" height="8" viewBox="0 0 14 8"><path d="M0 0 H14 L7 8 Z" fill="#aeb0b2"/></svg>
<svg style="position:absolute;left:616px;top:64px;" width="24" height="24" viewBox="0 0 24 24"><circle cx="12" cy="12" r="10" fill="none" stroke="#a9abad" stroke-width="3"/><rect x="10" y="1" width="4" height="7" fill="#a9abad"/><rect x="10" y="16" width="4" height="7" fill="#a9abad"/><rect x="1" y="10" width="7" height="4" fill="#a9abad"/><rect x="16" y="10" width="7" height="4" fill="#a9abad"/></svg>
<svg style="position:absolute;left:659px;top:62px;" width="24" height="28" viewBox="0 0 24 28"><path d="M12 0 V6 M8 4 L12 9 L16 4 M12 28 V22 M8 24 L12 19 L16 24" stroke="#a9abad" stroke-width="2.2" fill="none"/><path d="M1 9 V12 H23 V9 M1 19 V16 H23 V19" stroke="#a9abad" stroke-width="2" fill="none"/></svg>
<div style="left:700px;top:58px;width:3px;height:34px;background:#8a8c8e;border-radius:1px;opacity:.7"></div>
<svg style="position:absolute;left:717px;top:64px;" width="40" height="25" viewBox="0 0 40 25"><rect x="10" y="0" width="5" height="25" fill="#a9abad" transform="rotate(0 12.5 12.5)"/><rect x="10" y="0" width="5" height="25" fill="#a9abad" transform="rotate(45 12.5 12.5)"/><rect x="10" y="0" width="5" height="25" fill="#a9abad" transform="rotate(90 12.5 12.5)"/><rect x="10" y="0" width="5" height="25" fill="#a9abad" transform="rotate(135 12.5 12.5)"/><circle cx="12.5" cy="12.5" r="8" fill="#a9abad"/><circle cx="12.5" cy="12.5" r="3.5" fill="#3c3f41"/><path d="M29 9 H39 L34 15 Z" fill="#a9abad"/></svg>
<svg style="position:absolute;left:773px;top:64px;" width="27" height="24" viewBox="0 0 27 24"><rect x="1" y="1" width="6" height="22" fill="#a9abad"/><rect x="3" y="14" width="2" height="7" fill="#3c3f41"/><path d="M10 7 L16 2 V12 Z" fill="#a9abad"/><rect x="14" y="6" width="13" height="2.4" fill="#a9abad"/></svg>
<div style="left:813px;top:50px;width:2163px;height:2px;background:#4a4c4e;"></div>
<div style="left:813px;top:52px;width:2163px;height:46px;background:#3c3f41;"></div>
<div style="left:813px;top:98px;width:2163px;height:2px;background:#4b4b48;"></div>
<div style="left:813px;top:52px;width:337px;height:46px;background:#38362f;"></div>
<div style="left:1151px;top:52px;width:351px;height:46px;background:#4b483b;"></div>
<div style="left:1502px;top:52px;width:207px;height:46px;background:#38362f;"></div>
<div style="left:1709px;top:52px;width:297px;height:46px;background:#38362f;"></div>
<div style="left:2006px;top:52px;width:205px;height:46px;background:#38362f;"></div>
<div style="left:2211px;top:52px;width:369px;height:46px;background:#38362f;"></div>
<div style="left:2581px;top:52px;width:367px;height:46px;background:#38362f;"></div>
<div style="left:1150px;top:52px;width:2px;height:46px;background:#4e4e49;"></div>
<div style="left:1502px;top:52px;width:2px;height:46px;background:#4e4e49;"></div>
<div style="left:1709px;top:52px;width:2px;height:46px;background:#4e4e49;"></div>
<div style="left:2006px;top:52px;width:2px;height:46px;background:#4e4e49;"></div>
<div style="left:2211px;top:52px;width:2px;height:46px;background:#4e4e49;"></div>
<div style="left:2580px;top:52px;width:2px;height:46px;background:#4e4e49;"></div>
<div style="left:2948px;top:52px;width:2px;height:46px;background:#4e4e49;"></div>
<svg style="position:absolute;left:831.75px;top:61.75px;" width="28.5" height="28.5" viewBox="0 0 28.5 28.5"><circle cx="14.25" cy="14.25" r="14.25" fill="#3a8eb3"/><path d="M19.00 10.45 A5.27 5.27 0 1 0 19.00 18.05" fill="none" stroke="#1d3b4b" stroke-width="2.28" stroke-linecap="butt"/></svg>
<div class="t" style="left:869px;top:65.53px;font-size:23px;line-height:23px;color:#cbcbcb;font-family:'Liberation Sans', sans-serif;font-weight:normal;font-style:normal;">PendingCommand.php</div>
<svg style="position:absolute;left:1119px;top:70px;" width="14" height="14" viewBox="0 0 14 14"><path d="M1 1 L13 13 M13 1 L1 13" stroke="#707070" stroke-width="2"/></svg>
<svg style="position:absolute;left:1169.75px;top:61.75px;" width="28.5" height="28.5" viewBox="0 0 28.5 28.5"><circle cx="14.25" cy="14.25" r="14.25" fill="#3a8eb3"/><path d="M19.00 10.45 A5.27 5.27 0 1 0 19.00 18.05" fill="none" stroke="#1d3b4b" stroke-width="2.28" stroke-linecap="butt"/></svg>
<div class="t" style="left:1207px;top:65.53px;font-size:23px;line-height:23px;color:#cbcbcb;font-family:'Liberation Sans', sans-serif;font-weight:normal;font-style:normal;">private/.../Container.php</div>
<svg style="position:absolute;left:1471px;top:70px;" width="14" height="14" viewBox="0 0 14 14"><path d="M1 1 L13 13 M13 1 L1 13" stroke="#707070" stroke-width="2"/></svg>
<div style="left:1151px;top:94px;width:351px;height:5px;background:#40a8c8;"></div>
<svg style="position:absolute;left:1520.75px;top:61.75px;" width="28.5" height="28.5" viewBox="0 0 28.5 28.5"><circle cx="14.25" cy="14.25" r="14.25" fill="#3a8eb3"/><path d="M19.00 10.45 A5.27 5.27 0 1 0 19.00 18.05" fill="none" stroke="#1d3b4b" stroke-width="2.28" stroke-linecap="butt"/></svg>
<div class="t" style="left:1558px;top:65.53px;font-size:23px;line-height:23px;color:#cbcbcb;font-family:'Liberation Sans', sans-serif;font-weight:normal;font-style:normal;">Route.php</div>
<svg style="position:absolute;left:1678px;top:70px;" width="14" height="14" viewBox="0 0 14 14"><path d="M1 1 L13 13 M13 1 L1 13" stroke="#707070" stroke-width="2"/></svg>
<svg style="position:absolute;left:1727.75px;top:61.75px;" width="28.5" height="28.5" viewBox="0 0 28.5 28.5"><circle cx="14.25" cy="14.25" r="14.25" fill="#3a8eb3"/><path d="M19.00 10.45 A5.27 5.27 0 1 0 19.00 18.05" fill="none" stroke="#1d3b4b" stroke-width="2.28" stroke-linecap="butt"/></svg>
<div class="t" style="left:1765px;top:65.53px;font-size:23px;line-height:23px;color:#cbcbcb;font-family:'Liberation Sans', sans-serif;font-weight:normal;font-style:normal;">TaskController.php</div>
<svg style="position:absolute;left:1975px;top:70px;" width="14" height="14" viewBox="0 0 14 14"><path d="M1 1 L13 13 M13 1 L1 13" stroke="#707070" stroke-width="2"/></svg>
<svg style="position:absolute;left:2026px;top:60px;" width="31" height="33" viewBox="0 0 31 33"><path d="M10 0 H24 V16.5 H1.5 V8.5 H10 Z" fill="#9ba6ac"/><path d="M1.5 7 L8.5 0 V7 Z" fill="#a9b3b8"/><rect x="0" y="17.8" width="30.5" height="14.5" fill="#9b7fc9"/><text x="15.2" y="30" font-family="Liberation Sans" font-size="15.5" fill="#4a3570" text-anchor="middle">php</text></svg>
<div class="t" style="left:2062px;top:65.53px;font-size:23px;line-height:23px;color:#cbcbcb;font-family:'Liberation Sans', sans-serif;font-weight:normal;font-style:normal;">index.php</div>
<svg style="position:absolute;left:2180px;top:70px;" width="14" height="14" viewBox="0 0 14 14"><path d="M1 1 L13 13 M13 1 L1 13" stroke="#707070" stroke-width="2"/></svg>
<svg style="position:absolute;left:2229.75px;top:61.75px;" width="28.5" height="28.5" viewBox="0 0 28.5 28.5"><circle cx="14.25" cy="14.25" r="14.25" fill="#3a8eb3"/><path d="M19.00 10.45 A5.27 5.27 0 1 0 19.00 18.05" fill="none" stroke="#1d3b4b" stroke-width="2.28" stroke-linecap="butt"/></svg>
<div class="t" style="left:2267px;top:65.53px;font-size:23px;line-height:23px;color:#cbcbcb;font-family:'Liberation Sans', sans-serif;font-weight:normal;font-style:normal;">private/.../Application.php</div>
<svg style="position:absolute;left:2549px;top:70px;" width="14" height="14" viewBox="0 0 14 14"><path d="M1 1 L13 13 M13 1 L1 13" stroke="#707070" stroke-width="2"/></svg>
<svg style="position:absolute;left:2599.75px;top:61.75px;" width="28.5" height="28.5" viewBox="0 0 28.5 28.5"><circle cx="14.25" cy="14.25" r="14.25" fill="#3a8eb3"/><path d="M19.00 10.45 A5.27 5.27 0 1 0 19.00 18.05" fill="none" stroke="#1d3b4b" stroke-width="2.28" stroke-linecap="butt"/></svg>
<div class="t" style="left:2637px;top:65.53px;font-size:23px;line-height:23px;color:#cbcbcb;font-family:'Liberation Sans', sans-serif;font-weight:normal;font-style:normal;">vendor/.../Application.php</div>
<svg style="position:absolute;left:2917px;top:70px;" width="14" height="14" viewBox="0 0 14 14"><path d="M1 1 L13 13 M13 1 L1 13" stroke="#707070" stroke-width="2"/></svg>
<div style="left:0px;top:1250px;width:2976px;height:48px;background:#3c3f41;"></div>
<div class="t" style="left:-10px;top:1263.68px;font-size:24px;line-height:24px;color:#c3c3c3;font-family:'Liberation Sans', sans-serif;font-weight:normal;font-style:normal;">Debug:</div>
<div style="left:76px;top:1250px;width:212px;height:48px;background:#333537;"></div>
<svg style="position:absolute;left:99px;top:1261px;" width="28" height="28" viewBox="0 0 28 28"><ellipse cx="12" cy="15" rx="9" ry="10" fill="#9a9a9a"/><path d="M3 15 H21" stroke="#6d6d6d" stroke-width="1.5"/><circle cx="21" cy="14" r="5" fill="#9a9a9a"/><path d="M5 3 L9 7 M17 3 L13 7 M1 12 H5 M1 20 L5 19 M3 27 L7 23 M20 27 L16 23 M25 8 L23 10 M26 19 L23 18" stroke="#9a9a9a" stroke-width="1.6"/></svg>
<div class="t" style="left:135px;top:1262.84px;font-size:25px;line-height:25px;color:#d0d0d0;font-family:'Liberation Sans', sans-serif;font-weight:normal;font-style:normal;">index.php</div>
<svg style="position:absolute;left:258px;top:1270px;" width="14" height="14" viewBox="0 0 14 14"><path d="M1 1 L13 13 M13 1 L1 13" stroke="#707070" stroke-width="2"/></svg>
<div style="left:0px;top:1298px;width:2976px;height:2px;background:#2b2d2f;"></div>
<div style="left:0px;top:1300px;width:2976px;height:50px;background:#3b3e40;"></div>
<div style="left:162px;top:1300px;width:172px;height:50px;background:#333537;"></div>
<div style="left:0px;top:1300px;width:36px;height:698px;background:#3c3f41;"></div>
<div style="left:36px;top:1300px;width:1px;height:698px;background:#2e3032;"></div>
<div style="left:37px;top:1350px;width:2939px;height:8px;background:#4a4d4f;"></div>
<div style="left:37px;top:1300px;width:124px;height:57px;background:#4b4e50;"></div>
<div class="t" style="left:51px;top:1313.53px;font-size:23px;line-height:23px;color:#c8c8c8;font-family:'Liberation Sans', sans-serif;font-weight:normal;font-style:normal;">Debugger</div>
<svg style="position:absolute;left:174px;top:1310px;" width="28" height="28" viewBox="0 0 28 28"><rect x="0" y="0" width="28" height="28" fill="#8d8f91"/><rect x="0" y="0" width="28" height="5" fill="#4ea0d6"/><rect x="4" y="7" width="20" height="17" fill="#3f6d8e"/><path d="M7 11 H21 M7 14 H19 M7 17 H21 M7 20 H17" stroke="#9ab4c6" stroke-width="1.2"/></svg>
<div class="t" style="left:210.5px;top:1313.95px;font-size:22.5px;line-height:22.5px;color:#cbcbcb;font-family:'Liberation Sans', sans-serif;font-weight:normal;font-style:normal;">Console</div>
<svg style="position:absolute;left:306px;top:1313px;" width="24" height="20" viewBox="0 0 24 20"><path d="M1 12 H13 M9 8 L13 12 L9 16" stroke="#a0a0a0" stroke-width="2" fill="none"/><rect x="17" y="2" width="6" height="6" fill="#a0a0a0"/></svg>
<div style="left:333px;top:1300px;width:2px;height:50px;background:#4a4d4f;"></div>
<svg style="position:absolute;left:346px;top:1310px;" width="30" height="28" viewBox="0 0 30 28"><path d="M0 0 L9 9 L0 18 Z" fill="#e35d4e"/><rect x="12" y="7" width="16" height="4" fill="#8d8f91"/><rect x="12" y="13" width="16" height="4" fill="#8d8f91"/><rect x="6" y="19" width="22" height="3.5" fill="#4a9ed6"/><rect x="6" y="24" width="22" height="3.5" fill="#4a9ed6"/></svg>
<div style="left:392px;top:1304px;width:2px;height:2px;background:#6a6c6e;"></div>
<div style="left:654px;top:1304px;width:2px;height:2px;background:#6a6c6e;"></div>
<div style="left:392px;top:1310px;width:2px;height:2px;background:#6a6c6e;"></div>
<div style="left:654px;top:1310px;width:2px;height:2px;background:#6a6c6e;"></div>
<div style="left:392px;top:1316px;width:2px;height:2px;background:#6a6c6e;"></div>
<div style="left:654px;top:1316px;width:2px;height:2px;background:#6a6c6e;"></div>
<div style="left:392px;top:1322px;width:2px;height:2px;background:#6a6c6e;"></div>
<div style="left:654px;top:1322px;width:2px;height:2px;background:#6a6c6e;"></div>
<div style="left:392px;top:1328px;width:2px;height:2px;background:#6a6c6e;"></div>
<div style="left:654px;top:1328px;width:2px;height:2px;background:#6a6c6e;"></div>
<div style="left:392px;top:1334px;width:2px;height:2px;background:#6a6c6e;"></div>
<div style="left:654px;top:1334px;width:2px;height:2px;background:#6a6c6e;"></div>
<div style="left:392px;top:1340px;width:2px;height:2px;background:#6a6c6e;"></div>
<div style="left:654px;top:1340px;width:2px;height:2px;background:#6a6c6e;"></div>
<svg style="position:absolute;left:408px;top:1309px;" width="30" height="30" viewBox="0 0 30 30"><rect x="0" y="0" width="28" height="3.5" fill="#8d8f91"/><path d="M10 5 H18 V12 H24 L14 22 L4 12 H10 Z" fill="#4a9ed6"/><rect x="0" y="25" width="28" height="3.5" fill="#8d8f91"/></svg>
<svg style="position:absolute;left:458px;top:1309px;" width="30" height="30" viewBox="0 0 30 30"><path d="M3 3 L15 15" stroke="#4a9ed6" stroke-width="5.5" fill="none"/><path d="M7 22 L22 22 L22 7 Z" fill="#4a9ed6"/><rect x="0" y="25" width="28" height="3.5" fill="#8d8f91"/></svg>
<svg style="position:absolute;left:508px;top:1309px;" width="30" height="30" viewBox="0 0 30 30"><path d="M2 7 Q12 3 17 12" stroke="#e35d4e" stroke-width="5" fill="none"/><path d="M10 22 L22 22 L22 8 Z" fill="#e35d4e"/><rect x="0" y="25" width="28" height="3.5" fill="#8d8f91"/></svg>
<svg style="position:absolute;left:558px;top:1309px;" width="30" height="30" viewBox="0 0 30 30"><path d="M6 18 L18 6" stroke="#4a9ed6" stroke-width="5" fill="none"/><path d="M10 2 H24 V16 Z" fill="#4a9ed6"/><rect x="0" y="25" width="28" height="3.5" fill="#8d8f91"/></svg>
<svg style="position:absolute;left:608px;top:1309px;" width="30" height="30" viewBox="0 0 30 30"><path d="M2 2 L11 11" stroke="#4a9ed6" stroke-width="4.5" fill="none"/><path d="M4 14 H15 V3 Z" fill="#4a9ed6"/><path d="M18 8 H26 M22 8 V28 M18 28 H26" stroke="#c8c8c8" stroke-width="2"/></svg>
<svg style="position:absolute;left:672px;top:1311px;" width="27" height="25" viewBox="0 0 27 25"><rect x="0" y="0" width="27" height="25" fill="#c4c4c4"/><rect x="3.5" y="3.5" width="20" height="6" fill="#4f8db5" stroke="#9fd3ef" stroke-width="1"/><rect x="4" y="12" width="4" height="2.2" fill="#7a7a7a"/><rect x="10" y="12" width="4" height="2.2" fill="#7a7a7a"/><rect x="16" y="12.5" width="7" height="3" fill="#e0604f"/><rect x="4" y="16" width="4" height="2.2" fill="#7a7a7a"/><rect x="10" y="16" width="4" height="2.2" fill="#7a7a7a"/><rect x="16" y="17" width="7" height="3" fill="#22c23a"/><rect x="4" y="20" width="4" height="2.2" fill="#7a7a7a"/><rect x="10" y="20" width="4" height="2.2" fill="#7a7a7a"/></svg>
<svg style="position:absolute;left:720px;top:1310px;" width="29" height="29" viewBox="0 0 29 29"><circle cx="14.5" cy="14.5" r="14" fill="#d39b3a"/><text x="14.5" y="21" font-family="Liberation Sans" font-size="19" font-weight="bold" fill="#5a3d10" stroke="#5a3d10" stroke-width="1.2" text-anchor="middle">@</text></svg>
<div style="left:760px;top:1301px;width:48px;height:48px;background:#515457;border:2px solid #696c6f;border-radius:5px"></div>
<svg style="position:absolute;left:770px;top:1310px;" width="30" height="30" viewBox="0 0 30 30"><text x="0" y="9" font-family="Liberation Sans" font-size="9" font-weight="bold" fill="#4a9ed6">1</text><text x="0" y="19" font-family="Liberation Sans" font-size="9" font-weight="bold" fill="#4a9ed6">2</text><rect x="11" y="2" width="16" height="7" fill="#333" stroke="#9a9a9a" stroke-width="1.5"/><rect x="11" y="12" width="16" height="7" fill="#333" stroke="#9a9a9a" stroke-width="1.5"/><rect x="11" y="22" width="16" height="7" fill="#333" stroke="#9a9a9a" stroke-width="1.5"/><path d="M1 28 L27 1" stroke="#4a9ed6" stroke-width="2"/></svg>
<svg style="position:absolute;left:818px;top:1308px;" width="34" height="34" viewBox="0 0 34 34"><rect x="3.5" y="8.5" width="14" height="21" fill="none" stroke="#d9574a" stroke-width="3"/><path d="M7 12 H14 M7 15 H14 M7 18 H14 M7 21 H14" stroke="#c8c8c8" stroke-width="1.6"/><path d="M10 10 V2 H25 V7" stroke="#c8c8c8" stroke-width="2" fill="none"/><path d="M20 7 H31 L25.5 13 Z" fill="#c8c8c8"/></svg>
<svg style="position:absolute;left:0px;top:1318px;" width="20" height="26" viewBox="0 0 20 26"><path d="M-6 0 L18 13 L-6 26 Z" fill="#3fb54a"/></svg>
<div style="left:0px;top:1366px;width:6px;height:28px;background:#606264;"></div>
<div style="left:10px;top:1366px;width:6px;height:28px;background:#606264;"></div>
<div style="left:0px;top:1416px;width:16px;height:24px;background:#e0655a;"></div>
<div style="left:0px;top:1462px;width:2px;height:2px;background:#6a6c6e;"></div>
<div style="left:0px;top:1575px;width:2px;height:2px;background:#6a6c6e;"></div>
<div style="left:0px;top:1685px;width:2px;height:2px;background:#6a6c6e;"></div>
<div style="left:6px;top:1462px;width:2px;height:2px;background:#6a6c6e;"></div>
<div style="left:6px;top:1575px;width:2px;height:2px;background:#6a6c6e;"></div>
<div style="left:6px;top:1685px;width:2px;height:2px;background:#6a6c6e;"></div>
<div style="left:12px;top:1462px;width:2px;height:2px;background:#6a6c6e;"></div>
<div style="left:12px;top:1575px;width:2px;height:2px;background:#6a6c6e;"></div>
<div style="left:12px;top:1685px;width:2px;height:2px;background:#6a6c6e;"></div>
<div style="left:18px;top:1462px;width:2px;height:2px;background:#6a6c6e;"></div>
<div style="left:18px;top:1575px;width:2px;height:2px;background:#6a6c6e;"></div>
<div style="left:18px;top:1685px;width:2px;height:2px;background:#6a6c6e;"></div>
<div style="left:24px;top:1462px;width:2px;height:2px;background:#6a6c6e;"></div>
<div style="left:24px;top:1575px;width:2px;height:2px;background:#6a6c6e;"></div>
<div style="left:24px;top:1685px;width:2px;height:2px;background:#6a6c6e;"></div>
<div style="left:30px;top:1462px;width:2px;height:2px;background:#6a6c6e;"></div>
<div style="left:30px;top:1575px;width:2px;height:2px;background:#6a6c6e;"></div>
<div style="left:30px;top:1685px;width:2px;height:2px;background:#6a6c6e;"></div>
<svg style="position:absolute;left:0px;top:1480px;" width="30" height="30" viewBox="0 0 30 30"><circle cx="3" cy="10" r="8" fill="#e0655a"/><circle cx="3" cy="20" r="8" fill="#d6554b"/><circle cx="22" cy="9" r="3.5" fill="#b0b0b0"/><circle cx="22" cy="19" r="3.5" fill="#b0b0b0"/></svg>
<svg style="position:absolute;left:0px;top:1523px;" width="30" height="30" viewBox="0 0 30 30"><circle cx="7" cy="15" r="11" fill="#d9594e" stroke="#a0a0a0" stroke-width="3"/><path d="M-2 24 L18 5" stroke="#a0a0a0" stroke-width="3"/></svg>
<svg style="position:absolute;left:0px;top:1586px;" width="30" height="30" viewBox="0 0 30 30"><rect x="-4" y="2" width="14" height="12" fill="#4a9ed6"/><rect x="-1" y="5" width="8" height="6" fill="#333"/><rect x="12" y="2" width="14" height="12" fill="#8d8f91"/><rect x="15" y="5" width="8" height="6" fill="#444"/><rect x="-4" y="17" width="30" height="9" fill="#8d8f91"/><rect x="-1" y="20" width="24" height="3" fill="#444"/></svg>
<svg style="position:absolute;left:0px;top:1632px;" width="34" height="36" viewBox="0 0 34 36"><rect x="7" y="2" width="6" height="24" fill="#4a9ed6" transform="rotate(0 10 14)"/><rect x="7" y="2" width="6" height="24" fill="#4a9ed6" transform="rotate(45 10 14)"/><rect x="7" y="2" width="6" height="24" fill="#4a9ed6" transform="rotate(90 10 14)"/><rect x="7" y="2" width="6" height="24" fill="#4a9ed6" transform="rotate(135 10 14)"/><circle cx="10" cy="14" r="8.5" fill="#4a9ed6"/><circle cx="10" cy="14" r="3.5" fill="#3c3f41"/><path d="M20 28 H32 L26 35 Z" fill="#d8d8d8"/></svg>
<svg style="position:absolute;left:0px;top:1698px;" width="30" height="34" viewBox="0 0 30 34"><circle cx="8" cy="16" r="9" fill="#b07fc4"/><path d="M6 22 L-2 32" stroke="#9a9a9a" stroke-width="3"/><circle cx="20" cy="8" r="5" fill="#8a8a8a"/></svg>
<svg style="position:absolute;left:0px;top:1750px;" width="28" height="28" viewBox="0 0 28 28"><path d="M0 4 L20 24 M20 4 L0 24" stroke="#e0655a" stroke-width="4"/></svg>
<div style="left:37px;top:1358px;width:2939px;height:54px;background:#3d4a5a;"></div>
<svg style="position:absolute;left:48px;top:1370px;" width="27" height="28" viewBox="0 0 27 28"><rect x="1" y="1" width="17" height="17" fill="none" stroke="#8f9193" stroke-width="1.6"/><rect x="4.5" y="4.5" width="17" height="17" fill="#49473f" stroke="#8f9193" stroke-width="1.6"/><rect x="8" y="8" width="18" height="19" fill="#2f6580" stroke="#9a9c9e" stroke-width="1.6"/><path d="M15 12 L12 15 L15 17 M18 19 L21 21 L18 24" stroke="#d8e4ea" stroke-width="1.3" fill="none"/></svg>
<div class="t" style="left:85px;top:1372.88px;font-size:22px;line-height:22px;color:#c8c8c8;font-family:'Liberation Sans', sans-serif;font-weight:normal;font-style:normal;">Frames</div>
<svg style="position:absolute;left:1256px;top:1374px;" width="26" height="20" viewBox="0 0 26 20"><path d="M1 12 H13 M9 8 L13 12 L9 16" stroke="#a0a0a0" stroke-width="2" fill="none"/><rect x="17" y="2" width="6" height="6" fill="#a0a0a0"/></svg>
<div style="left:1287px;top:1358px;width:1px;height:640px;background:#2e3032;"></div>
<svg style="position:absolute;left:1299px;top:1371px;" width="26" height="26" viewBox="0 0 26 26"><rect x="1" y="1" width="24" height="7" fill="#d8a35c"/><rect x="1" y="10" width="24" height="7" fill="#d8a35c"/><rect x="1" y="19" width="24" height="7" fill="#d8a35c"/></svg>
<div class="t" style="left:1334px;top:1372.88px;font-size:22px;line-height:22px;color:#c8c8c8;font-family:'Liberation Sans', sans-serif;font-weight:normal;font-style:normal;">Variables</div>
<div style="left:37px;top:1412px;width:1250px;height:65px;background:#3c3f41;"></div>
<div style="left:37px;top:1476px;width:1250px;height:1px;background:#2e3032;"></div>
<svg style="position:absolute;left:1192px;top:1430px;" width="24" height="26" viewBox="0 0 24 26"><path d="M12 1 L23 12 H16 V25 H8 V12 H1 Z" fill="#5f6163"/></svg>
<svg style="position:absolute;left:1242px;top:1430px;" width="24" height="26" viewBox="0 0 24 26"><path d="M12 25 L23 14 H16 V1 H8 V14 H1 Z" fill="#4a9ed6"/></svg>
<div style="left:37px;top:1477px;width:1221px;height:521px;background:#49473c;"></div>
<div style="left:1258px;top:1477px;width:29px;height:521px;background:#3f4244;"></div>
<div style="left:1263px;top:1484px;width:17px;height:122px;background:#55585b;border-radius:8px"></div>
<div style="left:37px;top:1478px;width:1221px;height:40px;background:#2f65ca;"></div>
<svg style="position:absolute;left:55px;top:1484px;" width="27" height="28" viewBox="0 0 27 28"><rect x="1" y="1" width="17" height="17" fill="none" stroke="#8f9193" stroke-width="1.6"/><rect x="4.5" y="4.5" width="17" height="17" fill="#49473f" stroke="#8f9193" stroke-width="1.6"/><rect x="8" y="8" width="18" height="19" fill="#2f6580" stroke="#9a9c9e" stroke-width="1.6"/><path d="M15 12 L12 15 L15 17 M18 19 L21 21 L18 24" stroke="#d8e4ea" stroke-width="1.3" fill="none"/></svg>
<div class="t" style="left:90.8px;top:1485.22px;font-size:27.5px;line-height:27.5px;color:#ffffff">Container.php:572, <i style="letter-spacing:0.25px">Illuminate|Foundation|Application-&gt;call()</i></div>
<svg style="position:absolute;left:55px;top:1524px;" width="27" height="28" viewBox="0 0 27 28"><rect x="1" y="1" width="17" height="17" fill="none" stroke="#8f9193" stroke-width="1.6"/><rect x="4.5" y="4.5" width="17" height="17" fill="#49473f" stroke="#8f9193" stroke-width="1.6"/><rect x="8" y="8" width="18" height="19" fill="#2f6580" stroke="#9a9c9e" stroke-width="1.6"/><path d="M15 12 L12 15 L15 17 M18 19 L21 21 L18 24" stroke="#d8e4ea" stroke-width="1.3" fill="none"/></svg>
<div class="t" style="left:90.8px;top:1525.22px;font-size:27.5px;line-height:27.5px;color:#c4c4c4">PendingCommand.php:138, <i style="letter-spacing:0.25px">Illuminate|Foundation|Testing|PendingCommand-&gt;run()</i></div>
<svg style="position:absolute;left:55px;top:1564px;" width="27" height="28" viewBox="0 0 27 28"><rect x="1" y="1" width="17" height="17" fill="none" stroke="#8f9193" stroke-width="1.6"/><rect x="4.5" y="4.5" width="17" height="17" fill="#49473f" stroke="#8f9193" stroke-width="1.6"/><rect x="8" y="8" width="18" height="19" fill="#2f6580" stroke="#9a9c9e" stroke-width="1.6"/><path d="M15 12 L12 15 L15 17 M18 19 L21 21 L18 24" stroke="#d8e4ea" stroke-width="1.3" fill="none"/></svg>
<div class="t" style="left:90.8px;top:1565.22px;font-size:27.5px;line-height:27.5px;color:#c4c4c4">PendingCommand.php:220, <i style="letter-spacing:0.25px">Illuminate|Foundation|Testing|PendingCommand-&gt;__destruct()</i></div>
<svg style="position:absolute;left:55px;top:1604px;" width="27" height="28" viewBox="0 0 27 28"><rect x="1" y="1" width="17" height="17" fill="none" stroke="#8f9193" stroke-width="1.6"/><rect x="4.5" y="4.5" width="17" height="17" fill="#49473f" stroke="#8f9193" stroke-width="1.6"/><rect x="8" y="8" width="18" height="19" fill="#2f6580" stroke="#9a9c9e" stroke-width="1.6"/><path d="M15 12 L12 15 L15 17 M18 19 L21 21 L18 24" stroke="#d8e4ea" stroke-width="1.3" fill="none"/></svg>
<div class="t" style="left:90.8px;top:1605.22px;font-size:27.5px;line-height:27.5px;color:#c4c4c4">TaskController.php:15, <i style="letter-spacing:0.25px">App|Http|Controllers|TaskController-&gt;index()</i></div>
<svg style="position:absolute;left:55px;top:1644px;" width="27" height="28" viewBox="0 0 27 28"><rect x="1" y="1" width="17" height="17" fill="none" stroke="#8f9193" stroke-width="1.6"/><rect x="4.5" y="4.5" width="17" height="17" fill="#49473f" stroke="#8f9193" stroke-width="1.6"/><rect x="8" y="8" width="18" height="19" fill="#2f6580" stroke="#9a9c9e" stroke-width="1.6"/><path d="M15 12 L12 15 L15 17 M18 19 L21 21 L18 24" stroke="#d8e4ea" stroke-width="1.3" fill="none"/></svg>
<div class="t" style="left:90.8px;top:1645.22px;font-size:27.5px;line-height:27.5px;color:#c4c4c4">ControllerDispatcher.php:48, <i style="letter-spacing:0.25px">Illuminate|Routing|ControllerDispatcher-&gt;dispatch()</i></div>
<svg style="position:absolute;left:55px;top:1684px;" width="27" height="28" viewBox="0 0 27 28"><rect x="1" y="1" width="17" height="17" fill="none" stroke="#8f9193" stroke-width="1.6"/><rect x="4.5" y="4.5" width="17" height="17" fill="#49473f" stroke="#8f9193" stroke-width="1.6"/><rect x="8" y="8" width="18" height="19" fill="#2f6580" stroke="#9a9c9e" stroke-width="1.6"/><path d="M15 12 L12 15 L15 17 M18 19 L21 21 L18 24" stroke="#d8e4ea" stroke-width="1.3" fill="none"/></svg>
<div class="t" style="left:90.8px;top:1685.22px;font-size:27.5px;line-height:27.5px;color:#c4c4c4">Route.php:212, <i style="letter-spacing:0.25px">Illuminate|Routing|Route-&gt;runController()</i></div>
<svg style="position:absolute;left:55px;top:1724px;" width="27" height="28" viewBox="0 0 27 28"><rect x="1" y="1" width="17" height="17" fill="none" stroke="#8f9193" stroke-width="1.6"/><rect x="4.5" y="4.5" width="17" height="17" fill="#49473f" stroke="#8f9193" stroke-width="1.6"/><rect x="8" y="8" width="18" height="19" fill="#2f6580" stroke="#9a9c9e" stroke-width="1.6"/><path d="M15 12 L12 15 L15 17 M18 19 L21 21 L18 24" stroke="#d8e4ea" stroke-width="1.3" fill="none"/></svg>
<div class="t" style="left:90.8px;top:1725.22px;font-size:27.5px;line-height:27.5px;color:#c4c4c4">Route.php:169, <i style="letter-spacing:0.25px">Illuminate|Routing|Route-&gt;run()</i></div>
<svg style="position:absolute;left:55px;top:1764px;" width="27" height="28" viewBox="0 0 27 28"><rect x="1" y="1" width="17" height="17" fill="none" stroke="#8f9193" stroke-width="1.6"/><rect x="4.5" y="4.5" width="17" height="17" fill="#49473f" stroke="#8f9193" stroke-width="1.6"/><rect x="8" y="8" width="18" height="19" fill="#2f6580" stroke="#9a9c9e" stroke-width="1.6"/><path d="M15 12 L12 15 L15 17 M18 19 L21 21 L18 24" stroke="#d8e4ea" stroke-width="1.3" fill="none"/></svg>
<div class="t" style="left:90.8px;top:1765.22px;font-size:27.5px;line-height:27.5px;color:#c4c4c4">Router.php:682, <i style="letter-spacing:0.25px">Illuminate|Routing|Router-&gt;Illuminate|Routing|{closure}()</i></div>
<svg style="position:absolute;left:55px;top:1804px;" width="27" height="28" viewBox="0 0 27 28"><rect x="1" y="1" width="17" height="17" fill="none" stroke="#8f9193" stroke-width="1.6"/><rect x="4.5" y="4.5" width="17" height="17" fill="#49473f" stroke="#8f9193" stroke-width="1.6"/><rect x="8" y="8" width="18" height="19" fill="#2f6580" stroke="#9a9c9e" stroke-width="1.6"/><path d="M15 12 L12 15 L15 17 M18 19 L21 21 L18 24" stroke="#d8e4ea" stroke-width="1.3" fill="none"/></svg>
<div class="t" style="left:90.8px;top:1805.22px;font-size:27.5px;line-height:27.5px;color:#c4c4c4">Pipeline.php:30, <i style="letter-spacing:0.25px">Illuminate|Routing|Pipeline-&gt;Illuminate|Routing|{closure}()</i></div>
<svg style="position:absolute;left:55px;top:1844px;" width="27" height="28" viewBox="0 0 27 28"><rect x="1" y="1" width="17" height="17" fill="none" stroke="#8f9193" stroke-width="1.6"/><rect x="4.5" y="4.5" width="17" height="17" fill="#49473f" stroke="#8f9193" stroke-width="1.6"/><rect x="8" y="8" width="18" height="19" fill="#2f6580" stroke="#9a9c9e" stroke-width="1.6"/><path d="M15 12 L12 15 L15 17 M18 19 L21 21 L18 24" stroke="#d8e4ea" stroke-width="1.3" fill="none"/></svg>
<div class="t" style="left:90.8px;top:1845.22px;font-size:27.5px;line-height:27.5px;color:#c4c4c4">SubstituteBindings.php:41, <i style="letter-spacing:0.25px">Illuminate|Routing|Middleware|SubstituteBindings-&gt;handle()</i></div>
<svg style="position:absolute;left:55px;top:1884px;" width="27" height="28" viewBox="0 0 27 28"><rect x="1" y="1" width="17" height="17" fill="none" stroke="#8f9193" stroke-width="1.6"/><rect x="4.5" y="4.5" width="17" height="17" fill="#49473f" stroke="#8f9193" stroke-width="1.6"/><rect x="8" y="8" width="18" height="19" fill="#2f6580" stroke="#9a9c9e" stroke-width="1.6"/><path d="M15 12 L12 15 L15 17 M18 19 L21 21 L18 24" stroke="#d8e4ea" stroke-width="1.3" fill="none"/></svg>
<div class="t" style="left:90.8px;top:1885.22px;font-size:27.5px;line-height:27.5px;color:#c4c4c4">Pipeline.php:151, <i style="letter-spacing:0.25px">Illuminate|Routing|Pipeline-&gt;Illuminate|Pipeline|{closure}()</i></div>
<svg style="position:absolute;left:55px;top:1924px;" width="27" height="28" viewBox="0 0 27 28"><rect x="1" y="1" width="17" height="17" fill="none" stroke="#8f9193" stroke-width="1.6"/><rect x="4.5" y="4.5" width="17" height="17" fill="#49473f" stroke="#8f9193" stroke-width="1.6"/><rect x="8" y="8" width="18" height="19" fill="#2f6580" stroke="#9a9c9e" stroke-width="1.6"/><path d="M15 12 L12 15 L15 17 M18 19 L21 21 L18 24" stroke="#d8e4ea" stroke-width="1.3" fill="none"/></svg>
<div class="t" style="left:90.8px;top:1925.22px;font-size:27.5px;line-height:27.5px;color:#c4c4c4">Pipeline.php:53, <i style="letter-spacing:0.25px">Illuminate|Routing|Pipeline-&gt;Illuminate|Routing|{closure}()</i></div>
<svg style="position:absolute;left:55px;top:1964px;" width="27" height="28" viewBox="0 0 27 28"><rect x="1" y="1" width="17" height="17" fill="none" stroke="#8f9193" stroke-width="1.6"/><rect x="4.5" y="4.5" width="17" height="17" fill="#49473f" stroke="#8f9193" stroke-width="1.6"/><rect x="8" y="8" width="18" height="19" fill="#2f6580" stroke="#9a9c9e" stroke-width="1.6"/><path d="M15 12 L12 15 L15 17 M18 19 L21 21 L18 24" stroke="#d8e4ea" stroke-width="1.3" fill="none"/></svg>
<div class="t" style="left:90.8px;top:1965.22px;font-size:27.5px;line-height:27.5px;color:#c4c4c4">VerifyCsrfToken.php:75, <i style="letter-spacing:0.25px">App|Http|Middleware|VerifyCsrfToken-&gt;handle()</i></div>
<div style="left:61px;top:1469px;width:1120px;height:93px;border:6px solid #e8522b;border-radius:11px;"></div>
<div style="left:1288px;top:1412px;width:50px;height:586px;background:#3c3f41;"></div>
<div style="left:1338px;top:1412px;width:2px;height:586px;background:#2e3032;"></div>
<svg style="position:absolute;left:1297px;top:1421px;" width="32" height="34" viewBox="0 0 32 34"><path d="M10 2 V20 M2 10 H18" stroke="#3fb54a" stroke-width="4"/><circle cx="8" cy="26" r="6" fill="#3f9a48"/><circle cx="19" cy="28" r="6" fill="#47b850"/><path d="M24 24 Q28 14 31 14" stroke="#a0a0a0" stroke-width="1.5" fill="none"/></svg>
<div style="left:1300px;top:1486px;width:24px;height:4px;background:#5a5d5f;"></div>
<svg style="position:absolute;left:1300px;top:1532px;" width="23" height="13" viewBox="0 0 23 13"><path d="M0 13 L11.5 0 L23 13 Z" fill="#5a5d5f"/></svg>
<svg style="position:absolute;left:1300px;top:1581px;" width="23" height="13" viewBox="0 0 23 13"><path d="M0 0 L11.5 13 L23 0 Z" fill="#5a5d5f"/></svg>
<svg style="position:absolute;left:1300px;top:1624px;" width="26" height="32" viewBox="0 0 26 32"><rect x="0" y="0" width="16" height="20" fill="#5a5d5f"/><rect x="8" y="8" width="17" height="23" fill="#5f6264" stroke="#3c3f41" stroke-width="2"/><path d="M12 15 H22 M12 19 H22 M12 23 H22" stroke="#48494b" stroke-width="1.5"/></svg>
<div style="left:1288px;top:1665px;width:49px;height:48px;background:#4b4e50;border:2px solid #5e6163;border-radius:5px"></div>
<svg style="position:absolute;left:1298px;top:1674px;" width="30" height="30" viewBox="0 0 30 30"><rect x="1" y="0" width="28" height="5" fill="#4a9ed6"/><rect x="1" y="5" width="28" height="18" fill="#8d8f91"/><circle cx="8" cy="21" r="6" fill="#47b850"/><circle cx="19" cy="23" r="6" fill="#47b850"/><path d="M6 14 Q9 8 12 12 M17 16 Q20 10 23 14" stroke="#555" stroke-width="1.5" fill="none"/></svg>
<div style="left:1340px;top:1412px;width:1636px;height:586px;background:#3c3f41;"></div>
<svg style="position:absolute;left:1383px;top:1420px;" width="28" height="26" viewBox="0 0 28 26"><path d="M14 1 L27 25 H1 Z" fill="#f1c232" stroke="#e3a81d" stroke-width="1"/><rect x="12.6" y="8" width="2.8" height="10" fill="#222"/><rect x="12.6" y="20" width="2.8" height="3" fill="#222"/></svg>
<div class="t" style="left:1419px;top:1419.52px;font-size:27.5px;line-height:27.5px;letter-spacing:0.2px;color:#c8c8c8">The script '/private/var/html/www/lavarel/vendor/laravel/framework/src/Illuminate/Container/Container.php' is outside the project</div>
<svg style="position:absolute;left:1383px;top:1458px;" width="28" height="26" viewBox="0 0 28 26"><path d="M14 1 L27 25 H1 Z" fill="#f1c232" stroke="#e3a81d" stroke-width="1"/><rect x="12.6" y="8" width="2.8" height="10" fill="#222"/><rect x="12.6" y="20" width="2.8" height="3" fill="#222"/></svg>
<div class="t" style="left:1419px;top:1457.52px;font-size:27.5px;line-height:27.5px;letter-spacing:0.2px;color:#c8c8c8"><span style="color:#589df6;text-decoration:underline;text-underline-offset:3px">Click to set up path mappings</span></div>
<svg style="position:absolute;left:1383px;top:1496px;" width="26" height="26" viewBox="0 0 26 26"><rect x="1" y="1" width="24" height="24" fill="#3c5f7e" stroke="#9aa0a4" stroke-width="2"/><text x="13" y="12" font-family="Liberation Sans" font-size="10" font-weight="bold" fill="#e6eef2" text-anchor="middle">10</text><text x="13" y="22" font-family="Liberation Sans" font-size="10" font-weight="bold" fill="#e6eef2" text-anchor="middle">01</text></svg>
<div class="t" style="left:1419px;top:1495.52px;font-size:27.5px;line-height:27.5px;letter-spacing:0.2px;color:#c8c8c8"><span style="color:#f08a83">$callback</span> <span style="color:#c0c0c0">=</span> <span style="color:#6a8759">"system"</span></div>
<svg style="position:absolute;left:1383px;top:1534px;" width="26" height="26" viewBox="0 0 26 26"><rect x="1" y="1" width="24" height="24" fill="#3c5f7e" stroke="#9aa0a4" stroke-width="2"/><text x="13" y="12" font-family="Liberation Sans" font-size="10" font-weight="bold" fill="#e6eef2" text-anchor="middle">10</text><text x="13" y="22" font-family="Liberation Sans" font-size="10" font-weight="bold" fill="#e6eef2" text-anchor="middle">01</text></svg>
<div class="t" style="left:1419px;top:1533.52px;font-size:27.5px;line-height:27.5px;letter-spacing:0.2px;color:#c8c8c8"><span style="color:#f08a83">$defaultMethod</span> <span style="color:#c0c0c0">=</span> <span style="color:#cc7832;font-weight:bold">null</span></div>
<svg style="position:absolute;left:1347px;top:1576px;" width="18" height="20" viewBox="0 0 18 20"><path d="M0 0 L18 10.0 L0 20 Z" fill="#a9a9a9"/></svg>
<svg style="position:absolute;left:1381px;top:1571px;" width="28" height="30" viewBox="0 0 28 30"><text x="2" y="9" font-family="Liberation Sans" font-size="9" fill="#4aa0d8">1</text><text x="2" y="19" font-family="Liberation Sans" font-size="9" fill="#4aa0d8">2</text><text x="2" y="29" font-family="Liberation Sans" font-size="9" fill="#4aa0d8">3</text><rect x="10" y="2" width="16" height="7" fill="none" stroke="#a9abad" stroke-width="1.8"/><rect x="10" y="12" width="16" height="7" fill="none" stroke="#a9abad" stroke-width="1.8"/><rect x="10" y="22" width="16" height="7" fill="none" stroke="#a9abad" stroke-width="1.8"/></svg>
<div class="t" style="left:1419px;top:1571.52px;font-size:27.5px;line-height:27.5px;letter-spacing:0.2px;color:#c8c8c8"><span style="color:#f08a83">$parameters</span> <span style="color:#c0c0c0">=</span> <span style="color:#8c8c8c">{array}</span> <span style="color:#c8c8c8">[1]</span></div>
<svg style="position:absolute;left:1347px;top:1614px;" width="18" height="20" viewBox="0 0 18 20"><path d="M0 0 L18 10.0 L0 20 Z" fill="#a9a9a9"/></svg>
<svg style="position:absolute;left:1383px;top:1611px;" width="26" height="26" viewBox="0 0 26 26"><rect x="1" y="1" width="24" height="7" fill="#d8a35c"/><rect x="1" y="10" width="24" height="7" fill="#d8a35c"/><rect x="1" y="19" width="24" height="7" fill="#d8a35c"/></svg>
<div class="t" style="left:1419px;top:1609.52px;font-size:27.5px;line-height:27.5px;letter-spacing:0.2px;color:#c8c8c8"><span style="color:#f08a83">$this</span> <span style="color:#c0c0c0">=</span> <span style="color:#8c8c8c">{Illuminate\Foundation\Application}</span> <span style="color:#c8c8c8">[31]</span></div>
<svg style="position:absolute;left:1347px;top:1652px;" width="18" height="20" viewBox="0 0 18 20"><path d="M0 0 L18 10.0 L0 20 Z" fill="#a9a9a9"/></svg>
<svg style="position:absolute;left:1381px;top:1647px;" width="28" height="30" viewBox="0 0 28 30"><text x="2" y="9" font-family="Liberation Sans" font-size="9" fill="#4aa0d8">1</text><text x="2" y="19" font-family="Liberation Sans" font-size="9" fill="#4aa0d8">2</text><text x="2" y="29" font-family="Liberation Sans" font-size="9" fill="#4aa0d8">3</text><rect x="10" y="2" width="16" height="7" fill="none" stroke="#a9abad" stroke-width="1.8"/><rect x="10" y="12" width="16" height="7" fill="none" stroke="#a9abad" stroke-width="1.8"/><rect x="10" y="22" width="16" height="7" fill="none" stroke="#a9abad" stroke-width="1.8"/></svg>
<div class="t" style="left:1419px;top:1647.52px;font-size:27.5px;line-height:27.5px;letter-spacing:0.2px;color:#c8c8c8"><span style="color:#f08a83">$_COOKIE</span> <span style="color:#c0c0c0">=</span> <span style="color:#8c8c8c">{array}</span> <span style="color:#c8c8c8">[1]</span></div>
<svg style="position:absolute;left:1347px;top:1690px;" width="18" height="20" viewBox="0 0 18 20"><path d="M0 0 L18 10.0 L0 20 Z" fill="#a9a9a9"/></svg>
<svg style="position:absolute;left:1381px;top:1685px;" width="28" height="30" viewBox="0 0 28 30"><text x="2" y="9" font-family="Liberation Sans" font-size="9" fill="#4aa0d8">1</text><text x="2" y="19" font-family="Liberation Sans" font-size="9" fill="#4aa0d8">2</text><text x="2" y="29" font-family="Liberation Sans" font-size="9" fill="#4aa0d8">3</text><rect x="10" y="2" width="16" height="7" fill="none" stroke="#a9abad" stroke-width="1.8"/><rect x="10" y="12" width="16" height="7" fill="none" stroke="#a9abad" stroke-width="1.8"/><rect x="10" y="22" width="16" height="7" fill="none" stroke="#a9abad" stroke-width="1.8"/></svg>
<div class="t" style="left:1419px;top:1685.52px;font-size:27.5px;line-height:27.5px;letter-spacing:0.2px;color:#c8c8c8"><span style="color:#f08a83">$_ENV</span> <span style="color:#c0c0c0">=</span> <span style="color:#8c8c8c">{array}</span> <span style="color:#c8c8c8">[32]</span></div>
<svg style="position:absolute;left:1347px;top:1728px;" width="18" height="20" viewBox="0 0 18 20"><path d="M0 0 L18 10.0 L0 20 Z" fill="#a9a9a9"/></svg>
<svg style="position:absolute;left:1381px;top:1723px;" width="28" height="30" viewBox="0 0 28 30"><text x="2" y="9" font-family="Liberation Sans" font-size="9" fill="#4aa0d8">1</text><text x="2" y="19" font-family="Liberation Sans" font-size="9" fill="#4aa0d8">2</text><text x="2" y="29" font-family="Liberation Sans" font-size="9" fill="#4aa0d8">3</text><rect x="10" y="2" width="16" height="7" fill="none" stroke="#a9abad" stroke-width="1.8"/><rect x="10" y="12" width="16" height="7" fill="none" stroke="#a9abad" stroke-width="1.8"/><rect x="10" y="22" width="16" height="7" fill="none" stroke="#a9abad" stroke-width="1.8"/></svg>
<div class="t" style="left:1419px;top:1723.52px;font-size:27.5px;line-height:27.5px;letter-spacing:0.2px;color:#c8c8c8"><span style="color:#f08a83">$_GET</span> <span style="color:#c0c0c0">=</span> <span style="color:#8c8c8c">{array}</span> <span style="color:#c8c8c8">[1]</span></div>
<svg style="position:absolute;left:1347px;top:1766px;" width="18" height="20" viewBox="0 0 18 20"><path d="M0 0 L18 10.0 L0 20 Z" fill="#a9a9a9"/></svg>
<svg style="position:absolute;left:1381px;top:1761px;" width="28" height="30" viewBox="0 0 28 30"><text x="2" y="9" font-family="Liberation Sans" font-size="9" fill="#4aa0d8">1</text><text x="2" y="19" font-family="Liberation Sans" font-size="9" fill="#4aa0d8">2</text><text x="2" y="29" font-family="Liberation Sans" font-size="9" fill="#4aa0d8">3</text><rect x="10" y="2" width="16" height="7" fill="none" stroke="#a9abad" stroke-width="1.8"/><rect x="10" y="12" width="16" height="7" fill="none" stroke="#a9abad" stroke-width="1.8"/><rect x="10" y="22" width="16" height="7" fill="none" stroke="#a9abad" stroke-width="1.8"/></svg>
<div class="t" style="left:1419px;top:1761.52px;font-size:27.5px;line-height:27.5px;letter-spacing:0.2px;color:#c8c8c8"><span style="color:#f08a83">$_REQUEST</span> <span style="color:#c0c0c0">=</span> <span style="color:#8c8c8c">{array}</span> <span style="color:#c8c8c8">[1]</span></div>
<svg style="position:absolute;left:1347px;top:1804px;" width="18" height="20" viewBox="0 0 18 20"><path d="M0 0 L18 10.0 L0 20 Z" fill="#a9a9a9"/></svg>
<svg style="position:absolute;left:1381px;top:1799px;" width="28" height="30" viewBox="0 0 28 30"><text x="2" y="9" font-family="Liberation Sans" font-size="9" fill="#4aa0d8">1</text><text x="2" y="19" font-family="Liberation Sans" font-size="9" fill="#4aa0d8">2</text><text x="2" y="29" font-family="Liberation Sans" font-size="9" fill="#4aa0d8">3</text><rect x="10" y="2" width="16" height="7" fill="none" stroke="#a9abad" stroke-width="1.8"/><rect x="10" y="12" width="16" height="7" fill="none" stroke="#a9abad" stroke-width="1.8"/><rect x="10" y="22" width="16" height="7" fill="none" stroke="#a9abad" stroke-width="1.8"/></svg>
<div class="t" style="left:1419px;top:1799.52px;font-size:27.5px;line-height:27.5px;letter-spacing:0.2px;color:#c8c8c8"><span style="color:#f08a83">$_SERVER</span> <span style="color:#c0c0c0">=</span> <span style="color:#8c8c8c">{array}</span> <span style="color:#c8c8c8">[67]</span></div>
<svg style="position:absolute;left:1347px;top:1842px;" width="18" height="20" viewBox="0 0 18 20"><path d="M0 0 L18 10.0 L0 20 Z" fill="#a9a9a9"/></svg>
<svg style="position:absolute;left:1381px;top:1837px;" width="28" height="30" viewBox="0 0 28 30"><text x="2" y="9" font-family="Liberation Sans" font-size="9" fill="#4aa0d8">1</text><text x="2" y="19" font-family="Liberation Sans" font-size="9" fill="#4aa0d8">2</text><text x="2" y="29" font-family="Liberation Sans" font-size="9" fill="#4aa0d8">3</text><rect x="10" y="2" width="16" height="7" fill="none" stroke="#a9abad" stroke-width="1.8"/><rect x="10" y="12" width="16" height="7" fill="none" stroke="#a9abad" stroke-width="1.8"/><rect x="10" y="22" width="16" height="7" fill="none" stroke="#a9abad" stroke-width="1.8"/></svg>
<div class="t" style="left:1419px;top:1837.52px;font-size:27.5px;line-height:27.5px;letter-spacing:0.2px;color:#c8c8c8"><span style="color:#f08a83">$GLOBALS</span> <span style="color:#c0c0c0">=</span> <span style="color:#8c8c8c">{array}</span> <span style="color:#c8c8c8">[14]</span></div>
<svg style="position:absolute;left:1347px;top:1880px;" width="18" height="20" viewBox="0 0 18 20"><path d="M0 0 L18 10.0 L0 20 Z" fill="#a9a9a9"/></svg>
<svg style="position:absolute;left:1381px;top:1874px;" width="30" height="30" viewBox="0 0 30 30"><path d="M1 15 L8 2.5 H22 L29 15 L22 27.5 H8 Z" fill="#c89a4c"/><path d="M19 11 A5.5 5.5 0 1 0 19 19" stroke="#5a3d10" stroke-width="2" fill="none"/></svg>
<div class="t" style="left:1419px;top:1875.52px;font-size:27.5px;line-height:27.5px;letter-spacing:0.2px;color:#c8c8c8">Constants</div>
</div></body></html>
